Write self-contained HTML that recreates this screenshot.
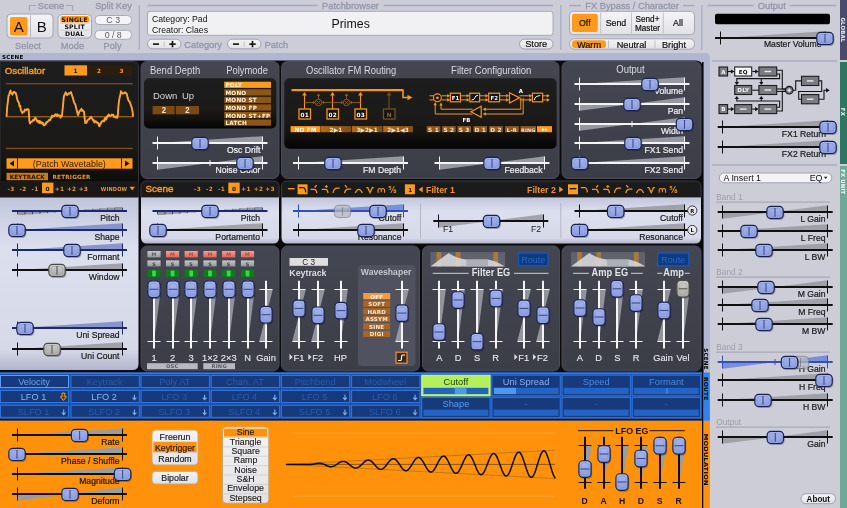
<!DOCTYPE html>
<html lang="en"><head><meta charset="utf-8"><title>Surge</title>
<style>
html,body{margin:0;padding:0;background:#cccdd7;overflow:hidden}
body{width:847px;height:508px}
svg{display:block;font-family:"Liberation Sans",sans-serif;will-change:transform;transform:translateZ(0)}
.px{font-family:"DejaVu Sans","Liberation Sans",sans-serif;letter-spacing:0.2px}
</style></head><body>
<svg width="847" height="508" viewBox="0 0 847 508">
<defs>
<linearGradient id="hg" x1="0" y1="0" x2="0" y2="1"><stop offset="0" stop-color="#a6b6ef"/><stop offset="1" stop-color="#8b9cdd"/></linearGradient>
<linearGradient id="hgg" x1="0" y1="0" x2="0" y2="1"><stop offset="0" stop-color="#cfcfcf"/><stop offset="1" stop-color="#a9a9a9"/></linearGradient>
<linearGradient id="lightp" x1="0" y1="0" x2="0" y2="1"><stop offset="0" stop-color="#c2c6dc"/><stop offset="0.3" stop-color="#dcdfed"/><stop offset="0.88" stop-color="#d6d9e8"/><stop offset="1" stop-color="#b2b5ca"/></linearGradient>
<linearGradient id="darkp" x1="0" y1="0" x2="0" y2="1"><stop offset="0" stop-color="#444651"/><stop offset="1" stop-color="#3b3d47"/></linearGradient>
<linearGradient id="blk" x1="0" y1="0" x2="0" y2="1"><stop offset="0" stop-color="#1d1d1d"/><stop offset="0.62" stop-color="#1b1a19"/><stop offset="0.8" stop-color="#131211"/><stop offset="1" stop-color="#040404"/></linearGradient>
<linearGradient id="fmb" x1="0" y1="0" x2="1" y2="0"><stop offset="0" stop-color="#b36c18"/><stop offset="1" stop-color="#85500f"/></linearGradient>
<linearGradient id="mred" x1="0" y1="0" x2="0" y2="1"><stop offset="0" stop-color="#f6a093"/><stop offset="1" stop-color="#de6558"/></linearGradient>
<linearGradient id="mgry" x1="0" y1="0" x2="0" y2="1"><stop offset="0" stop-color="#c6c7cc"/><stop offset="1" stop-color="#96979e"/></linearGradient>
<linearGradient id="btn" x1="0" y1="0" x2="0" y2="1"><stop offset="0" stop-color="#f4f4f6"/><stop offset="1" stop-color="#e2e2e6"/></linearGradient>
</defs>
<rect x="0" y="0" width="847" height="508" fill="#cccdd7"/>
<rect x="0" y="53" width="706" height="9" fill="#b3b6d0"/>
<path d="M700 53 H706 Q710 53 710 58 V508 H700 Z" fill="#b3b6d0"/>
<path d="M0 60.5 H696 Q702.5 60.5 702.5 67 V508 H0 Z" fill="#0b0b0e"/>
<text x="2" y="59.3" font-size="5.6" fill="#000" font-weight="bold" class="px">SCENE</text>
<rect x="840" y="0" width="7" height="60" fill="#4a4a6a"/>
<rect x="840" y="62" width="7" height="102" fill="#2d7661"/>
<rect x="840" y="166" width="7" height="342" fill="#6fa896"/>
<text x="0" y="0" font-size="5.6" fill="#eeeef4" font-weight="bold" class="px" transform="translate(841.2 17.4) rotate(90)" textLength="25" lengthAdjust="spacingAndGlyphs">GLOBAL</text>
<text x="0" y="0" font-size="5.6" fill="#e4f5ee" font-weight="bold" class="px" transform="translate(841.2 107.8) rotate(90)" textLength="8.2" lengthAdjust="spacingAndGlyphs">FX</text>
<text x="0" y="0" font-size="5.6" fill="#f4fffa" font-weight="bold" class="px" transform="translate(841.2 169.3) rotate(90)" textLength="25" lengthAdjust="spacingAndGlyphs">FX UNIT</text>
<text transform="translate(51 8.7) scale(0.99 1)" font-size="9.4" fill="#9496aa" text-anchor="middle" stroke="#9496aa" stroke-width="0.3">Scene</text>
<path d="M29.5 11 V5.5 H36" fill="none" stroke="#a3a6bf" stroke-width="1.2"/>
<path d="M66 5.5 H72.5 V11" fill="none" stroke="#a3a6bf" stroke-width="1.2"/>
<rect x="7" y="14" width="46" height="24" fill="url(#btn)" rx="4" stroke="#a4a6b6" stroke-width="1"/>
<rect x="10" y="17" width="17.5" height="18.5" fill="#ff9a1a" rx="2"/>
<line x1="30.5" y1="15" x2="30.5" y2="37" stroke="#b9bac6" stroke-width="1" />
<text x="18.7" y="31.5" font-size="15" fill="#111" text-anchor="middle">A</text>
<text x="41.7" y="31.5" font-size="15" fill="#111" text-anchor="middle">B</text>
<text transform="translate(28 49.3) scale(0.99 1)" font-size="9.4" fill="#9496aa" text-anchor="middle" stroke="#9496aa" stroke-width="0.3">Select</text>
<rect x="58" y="14.5" width="33.5" height="23.5" fill="url(#btn)" rx="4" stroke="#a4a6b6" stroke-width="1"/>
<rect x="60.5" y="16" width="28.5" height="6.6" fill="#ff9a1a" rx="1.5"/>
<line x1="60" y1="23.2" x2="89.5" y2="23.2" stroke="#c4c5cf" stroke-width="0.8" />
<line x1="60" y1="30.2" x2="89.5" y2="30.2" stroke="#c4c5cf" stroke-width="0.8" />
<text x="74.7" y="21.7" font-size="6.2" fill="#1a1208" text-anchor="middle" font-weight="bold" class="px">SINGLE</text>
<text x="74.7" y="29" font-size="6.2" fill="#111" text-anchor="middle" font-weight="bold" class="px">SPLIT</text>
<text x="74.7" y="36.2" font-size="6.2" fill="#111" text-anchor="middle" font-weight="bold" class="px">DUAL</text>
<text transform="translate(72.5 49.3) scale(0.99 1)" font-size="9.4" fill="#9496aa" text-anchor="middle" stroke="#9496aa" stroke-width="0.3">Mode</text>
<text transform="translate(113.5 8.7) scale(0.99 1)" font-size="9.4" fill="#9496aa" text-anchor="middle" stroke="#9496aa" stroke-width="0.3">Split Key</text>
<rect x="95" y="15.5" width="36.5" height="9" fill="#f4f4f6" rx="4" stroke="#a8aaba" stroke-width="1"/>
<text x="113.2" y="23.3" font-size="8.8" fill="#5c5c62" text-anchor="middle">C 3</text>
<rect x="95" y="30.3" width="36.5" height="9" fill="#f4f4f6" rx="4" stroke="#a8aaba" stroke-width="1"/>
<text x="113.2" y="38.1" font-size="8.8" fill="#5c5c62" text-anchor="middle">0 / 8</text>
<text transform="translate(112.5 49.3) scale(0.99 1)" font-size="9.4" fill="#9496aa" text-anchor="middle" stroke="#9496aa" stroke-width="0.3">Poly</text>
<line x1="139.3" y1="5" x2="139.3" y2="50" stroke="#a9acc4" stroke-width="1.3" />
<text transform="translate(350.5 8.6) scale(0.99 1)" font-size="9.4" fill="#9496aa" text-anchor="middle" stroke="#9496aa" stroke-width="0.3">Patchbrowser</text>
<line x1="147.5" y1="5.6" x2="317.5" y2="5.6" stroke="#a6a9c2" stroke-width="1.5" />
<line x1="383.5" y1="5.6" x2="553" y2="5.6" stroke="#a6a9c2" stroke-width="1.5" />
<rect x="147.5" y="11.3" width="405.5" height="24" fill="#f1f1f3" rx="2.5" stroke="#a6a8b8" stroke-width="1"/>
<text x="152" y="21.6" font-size="8.7" fill="#111">Category: Pad</text>
<text x="152" y="32.6" font-size="8.7" fill="#111">Creator: Claes</text>
<text x="350.7" y="27.7" font-size="12.3" fill="#111" text-anchor="middle">Primes</text>
<rect x="147.5" y="39.2" width="33.5" height="9.6" fill="url(#btn)" rx="4.8" stroke="#9fa1b2" stroke-width="1"/>
<line x1="164.2" y1="41.5" x2="164.2" y2="46.5" stroke="#b5b6c2" stroke-width="0.8" />
<rect x="153" y="43.3" width="6" height="1.6" fill="#111"/>
<rect x="169.3" y="43.3" width="6.4" height="1.6" fill="#111"/>
<rect x="171.7" y="40.9" width="1.6" height="6.4" fill="#111"/>
<text transform="translate(184.3 47.6) scale(0.99 1)" font-size="9.4" fill="#9496aa" stroke="#9496aa" stroke-width="0.3">Category</text>
<rect x="227.5" y="39.2" width="33.5" height="9.6" fill="url(#btn)" rx="4.8" stroke="#9fa1b2" stroke-width="1"/>
<line x1="244.2" y1="41.5" x2="244.2" y2="46.5" stroke="#b5b6c2" stroke-width="0.8" />
<rect x="233" y="43.3" width="6" height="1.6" fill="#111"/>
<rect x="249.3" y="43.3" width="6.4" height="1.6" fill="#111"/>
<rect x="251.7" y="40.9" width="1.6" height="6.4" fill="#111"/>
<text transform="translate(264.5 47.6) scale(0.99 1)" font-size="9.4" fill="#9496aa" stroke="#9496aa" stroke-width="0.3">Patch</text>
<rect x="519.5" y="39.2" width="33.5" height="9.8" fill="url(#btn)" rx="4.9" stroke="#9fa1b2" stroke-width="1"/>
<text x="536.2" y="47.3" font-size="9.2" fill="#111" text-anchor="middle" stroke="#111" stroke-width="0.2">Store</text>
<line x1="560.8" y1="5" x2="560.8" y2="50" stroke="#a9acc4" stroke-width="1.3" />
<text transform="translate(632 8.6) scale(0.99 1)" font-size="9.4" fill="#9496aa" text-anchor="middle" stroke="#9496aa" stroke-width="0.3">FX Bypass / Character</text>
<line x1="569" y1="5.6" x2="581" y2="5.6" stroke="#a6a9c2" stroke-width="1.5" />
<line x1="683" y1="5.6" x2="694.5" y2="5.6" stroke="#a6a9c2" stroke-width="1.5" />
<rect x="569.5" y="11.3" width="125" height="23.4" fill="url(#btn)" rx="4" stroke="#a4a6b6" stroke-width="1"/>
<rect x="572" y="13.8" width="25.8" height="18.3" fill="#ff9a1a" rx="2"/>
<line x1="600.7" y1="12.5" x2="600.7" y2="33.5" stroke="#c0c1cc" stroke-width="1" />
<line x1="631.5" y1="12.5" x2="631.5" y2="33.5" stroke="#c0c1cc" stroke-width="1" />
<line x1="663.3" y1="12.5" x2="663.3" y2="33.5" stroke="#c0c1cc" stroke-width="1" />
<text x="584.8" y="26.2" font-size="8.8" fill="#1a1208" text-anchor="middle" stroke="#111" stroke-width="0.2">Off</text>
<text x="616" y="26.2" font-size="8.8" fill="#111" text-anchor="middle" stroke="#111" stroke-width="0.2">Send</text>
<text x="647.5" y="22" font-size="8.2" fill="#111" text-anchor="middle" stroke="#111" stroke-width="0.2">Send+</text>
<text x="647.5" y="31.2" font-size="8.2" fill="#111" text-anchor="middle" stroke="#111" stroke-width="0.2">Master</text>
<text x="678" y="26.2" font-size="8.8" fill="#111" text-anchor="middle" stroke="#111" stroke-width="0.2">All</text>
<rect x="569.5" y="38.8" width="125" height="10.4" fill="url(#btn)" rx="5" stroke="#a4a6b6" stroke-width="1"/>
<rect x="572" y="40.3" width="34" height="7.6" fill="#ff9a1a" rx="3"/>
<line x1="608.5" y1="40.3" x2="608.5" y2="48" stroke="#c0c1cc" stroke-width="1" />
<line x1="655" y1="40.3" x2="655" y2="48" stroke="#c0c1cc" stroke-width="1" />
<text x="589" y="47.5" font-size="9.2" fill="#1a1208" text-anchor="middle" stroke="#111" stroke-width="0.2">Warm</text>
<text x="631.5" y="47.5" font-size="9.2" fill="#111" text-anchor="middle" stroke="#111" stroke-width="0.2">Neutral</text>
<text x="674" y="47.5" font-size="9.2" fill="#111" text-anchor="middle" stroke="#111" stroke-width="0.2">Bright</text>
<line x1="701.8" y1="5" x2="701.8" y2="50" stroke="#a9acc4" stroke-width="1.3" />
<text transform="translate(771.8 8.6) scale(0.99 1)" font-size="9.4" fill="#9496aa" text-anchor="middle" stroke="#9496aa" stroke-width="0.3">Output</text>
<line x1="707.5" y1="5.6" x2="753.8" y2="5.6" stroke="#a6a9c2" stroke-width="1.5" />
<line x1="789.8" y1="5.6" x2="836.3" y2="5.6" stroke="#a6a9c2" stroke-width="1.5" />
<rect x="715" y="13.8" width="115" height="10.5" fill="#000" rx="2"/>
<polygon points="720.5,38 825.5,31.2 825.5,38" fill="#9a9ba3" opacity="0.9"/>
<line x1="715" y1="38" x2="830" y2="38" stroke="#101010" stroke-width="2" />
<line x1="720.5" y1="31.5" x2="720.5" y2="44.5" stroke="#101010" stroke-width="1" />
<line x1="825.5" y1="31.5" x2="825.5" y2="44.5" stroke="#101010" stroke-width="1" />
<text transform="translate(821.5 47.2) scale(0.92 1)" font-size="9.4" fill="#1a1a1a" text-anchor="end" stroke="#1a1a1a" stroke-width="0.22">Master Volume</text>
<rect x="817.4" y="33.4" width="17" height="12.6" rx="4.2" fill="#0c1230" opacity="0.32"/>
<rect x="816.8" y="32.3" width="16.4" height="12.2" fill="url(#hg)" rx="4" stroke="#18224e" stroke-width="1.15"/>
<rect x="819.2" y="34.5" width="11.6" height="7.8" fill="none" rx="2.6" stroke="#8797d8" stroke-width="0.9" opacity="0.7"/>
<line x1="825" y1="34" x2="825" y2="42.8" stroke="#3c4c92" stroke-width="1.1" />
<path d="M0 61.5 H133 Q138.5 61.5 138.5 67 V197.5 H0 Z" fill="url(#blk)" stroke="#33343c" stroke-width="1"/>
<path d="M0 197 H138.5 V364 Q138.5 370 132.5 370 H0 Z" fill="url(#lightp)"/>
<text transform="translate(4.8 73.6) scale(0.98 1)" font-size="9.9" fill="#ff9a1a" stroke="#ff9a1a" stroke-width="0.45">Oscillator</text>
<rect x="64.5" y="65.3" width="68" height="10.2" fill="#2c1e0c"/>
<rect x="64.5" y="65.3" width="22.5" height="10.2" fill="#ff9a1a"/>
<text x="75.7" y="73.2" font-size="5.8" fill="#1a1208" text-anchor="middle" font-weight="bold" class="px">1</text>
<text x="99" y="73.2" font-size="5.8" fill="#ff9a1a" text-anchor="middle" font-weight="bold" class="px">2</text>
<text x="121.5" y="73.2" font-size="5.8" fill="#ff9a1a" text-anchor="middle" font-weight="bold" class="px">3</text>
<line x1="5.8" y1="83.8" x2="133" y2="83.8" stroke="#9a5d14" stroke-width="1" />
<line x1="5.8" y1="148.3" x2="133" y2="148.3" stroke="#9a5d14" stroke-width="1" />
<line x1="5.8" y1="116.8" x2="133" y2="116.8" stroke="#d07f18" stroke-width="0.9" />
<path d="M6.6 116.8 L6.6 116.31 L7.25 106.06 L7.9 101.51 L8.55 95.63 L9.2 94.72 L9.85 92.04 L10.5 90.58 L11.15 93.21 L11.8 93.27 L12.45 94.7 L13.1 92.79 L13.75 91.96 L14.4 92.01 L15.05 92.78 L15.7 92.72 L16.35 94.9 L17 97.93 L17.65 100.74 L18.3 101.61 L18.95 103.02 L19.6 106.56 L20.25 105.87 L20.9 110.34 L21.55 111.08 L22.2 113.02 L22.85 112.3 L23.5 111.6 L24.15 111.78 L24.8 109.44 L25.45 110.32 L26.1 110.24 L26.75 109.25 L27.4 109.65 L28.05 109.04 L28.7 109.94 L29.35 120.81 L30 123.63 L30.65 122.46 L31.3 121.68 L31.95 121.85 L32.6 120.81 L33.25 119.71 L33.9 120.43 L34.55 119.49 L35.2 117.55 L35.85 118.74 L36.5 119.48 L37.15 121.33 L37.8 121.7 L38.45 120.75 L39.1 122.98 L39.75 120.86 L40.4 122 L41.05 123.26 L41.7 122.15 L42.35 123.68 L43 123 L43.65 125.35 L44.3 125.28 L44.95 124.15 L45.6 124.42 L46.25 122.26 L46.9 122.7 L47.55 121.76 L48.2 121.06 L48.85 120.06 L49.5 120.47 L50.15 120.11 L50.8 118.13 L51.45 117.97 L52.1 115.58 L52.75 116.67 L53.4 115.82 L54.05 116.08 L54.7 115.45 L55.35 114.22 L56 114.77 L56.65 115.83 L57.3 114.29 L57.95 115.78 L58.6 115.23 L59.25 115.37 L59.9 115.48 L60.55 117.75 L61.2 116.23 L61.85 116.24 L62.5 110.49 L63.15 104.38 L63.8 96.51 L64.45 95.33 L65.1 93.4 L65.75 92.36 L66.4 93.56 L67.05 95.05 L67.7 94.61 L68.35 94.1 L69 93.06 L69.65 93.64 L70.3 92.95 L70.95 92.06 L71.6 94.03 L72.25 96.09 L72.9 98 L73.55 100.62 L74.2 102.83 L74.85 103.82 L75.5 105.01 L76.15 108.2 L76.8 110.41 L77.45 113.3 L78.1 115.11 L78.75 113.14 L79.4 111.42 L80.05 110.76 L80.7 110.68 L81.35 108.69 L82 110.82 L82.65 110.24 L83.3 111.02 L83.95 111.56 L84.6 117.31 L85.25 123.02 L85.9 121.73 L86.55 122.75 L87.2 120.65 L87.85 119.99 L88.5 119.72 L89.15 118.92 L89.8 118.75 L90.45 117.27 L91.1 116.79 L91.75 118.09 L92.4 118.83 L93.05 120.44 L93.7 119.91 L94.35 122.58 L95 122.14 L95.65 121.13 L96.3 121.71 L96.95 122.47 L97.6 123.1 L98.25 123.01 L98.9 125.63 L99.55 126.14 L100.2 124.08 L100.85 123.54 L101.5 121.84 L102.15 121.29 L102.8 121.31 L103.45 120.43 L104.1 121.35 L104.75 118.83 L105.4 117.78 L106.05 119.72 L106.7 117.86 L107.35 116.09 L108 116.5 L108.65 114.35 L109.3 115.05 L109.95 115.79 L110.6 115.73 L111.25 115.53 L111.9 114.58 L112.55 115.15 L113.2 114.86 L113.85 116.82 L114.5 116.43 L115.15 117.39 L115.8 116.41 L116.45 116.39 L117.1 117.97 L117.75 115.91 L118.4 106.58 L119.05 100.59 L119.7 97.21 L120.35 94.79 L121 91.14 L121.65 92.18 L122.3 93.1 L122.95 93.56 L123.6 93.36 L124.25 93.18 L124.9 92.23 L125.55 92.55 L126.2 93.58 L126.85 94.06 L127.5 97.34 L128.15 99.38 L128.8 101.2 L129.45 101.46 L130.1 102.97 L130.75 104.9 L131.4 106.73 L132.05 109.04 L132.7 112.56 L133 116.8" fill="none" stroke="#ffa42e" stroke-width="1.9" stroke-linejoin="round"/>
<rect x="6.5" y="158.3" width="126" height="10.4" fill="#ff9a1a"/>
<line x1="17.5" y1="158.3" x2="17.5" y2="168.7" stroke="#1c1c1c" stroke-width="1" />
<line x1="121.5" y1="158.3" x2="121.5" y2="168.7" stroke="#1c1c1c" stroke-width="1" />
<polygon points="9.5,163.5 14,160.4 14,166.6" fill="#111" />
<polygon points="129.5,163.5 125,160.4 125,166.6" fill="#111" />
<text transform="translate(69.3 166.9) scale(0.93 1)" font-size="9.6" fill="#2a1a04" text-anchor="middle">(Patch Wavetable)</text>
<rect x="6.5" y="172.8" width="41.5" height="7.4" fill="#c87b17"/>
<text x="27.3" y="179" font-size="5.7" fill="#1c1204" text-anchor="middle" font-weight="bold" class="px">KEYTRACK</text>
<text x="52.5" y="179" font-size="5.7" fill="#f0951f" font-weight="bold" class="px">RETRIGGER</text>
<rect x="0" y="181" width="138.5" height="16.5" fill="#191919"/>
<text x="11" y="190.6" font-size="5.8" fill="#f0951f" text-anchor="middle" font-weight="bold" class="px">-3</text>
<text x="23" y="190.6" font-size="5.8" fill="#f0951f" text-anchor="middle" font-weight="bold" class="px">-2</text>
<text x="35" y="190.6" font-size="5.8" fill="#f0951f" text-anchor="middle" font-weight="bold" class="px">-1</text>
<rect x="42" y="182.6" width="11.4" height="10.6" fill="#ff9a1a"/>
<text x="47.7" y="190.6" font-size="5.8" fill="#1a1208" text-anchor="middle" font-weight="bold" class="px">0</text>
<text x="59.5" y="190.6" font-size="5.8" fill="#f0951f" text-anchor="middle" font-weight="bold" class="px">+1</text>
<text x="71.7" y="190.6" font-size="5.8" fill="#f0951f" text-anchor="middle" font-weight="bold" class="px">+2</text>
<text x="83.3" y="190.6" font-size="5.8" fill="#f0951f" text-anchor="middle" font-weight="bold" class="px">+3</text>
<text x="100.7" y="190.6" font-size="5.6" fill="#f0951f" font-weight="bold" class="px" textLength="26.6" lengthAdjust="spacingAndGlyphs">WINDOW</text>
<polygon points="129.5,186.8 135,186.8 132.2,190.4" fill="#f0951f" />
<rect x="17.5" y="211" width="7.5" height="3.99" fill="#8f9099" opacity="0.9"/>
<line x1="17.5" y1="211" x2="17.5" y2="214.2" stroke="#1b2a6b" stroke-width="0.8" />
<rect x="25" y="211" width="7.5" height="3.38" fill="#8f9099" opacity="0.9"/>
<line x1="25" y1="211" x2="25" y2="214.2" stroke="#1b2a6b" stroke-width="0.8" />
<rect x="32.5" y="211" width="7.5" height="2.76" fill="#8f9099" opacity="0.9"/>
<line x1="32.5" y1="211" x2="32.5" y2="214.2" stroke="#1b2a6b" stroke-width="0.8" />
<rect x="40" y="211" width="7.5" height="2.15" fill="#8f9099" opacity="0.9"/>
<line x1="40" y1="211" x2="40" y2="213.75" stroke="#1b2a6b" stroke-width="0.8" />
<rect x="47.5" y="211" width="7.5" height="1.54" fill="#8f9099" opacity="0.9"/>
<line x1="47.5" y1="211" x2="47.5" y2="213.14" stroke="#1b2a6b" stroke-width="0.8" />
<rect x="55" y="211" width="7.5" height="0.92" fill="#8f9099" opacity="0.9"/>
<line x1="55" y1="211" x2="55" y2="212.52" stroke="#1b2a6b" stroke-width="0.8" />
<rect x="62.5" y="211" width="7.5" height="0.31" fill="#8f9099" opacity="0.9"/>
<line x1="62.5" y1="211" x2="62.5" y2="211.91" stroke="#1b2a6b" stroke-width="0.8" />
<rect x="70" y="210.69" width="7.5" height="0.31" fill="#8f9099" opacity="0.9"/>
<line x1="77.5" y1="210.09" x2="77.5" y2="211" stroke="#1b2a6b" stroke-width="0.8" />
<rect x="77.5" y="210.08" width="7.5" height="0.92" fill="#8f9099" opacity="0.9"/>
<line x1="85" y1="209.48" x2="85" y2="211" stroke="#1b2a6b" stroke-width="0.8" />
<rect x="85" y="209.46" width="7.5" height="1.54" fill="#8f9099" opacity="0.9"/>
<line x1="92.5" y1="208.86" x2="92.5" y2="211" stroke="#1b2a6b" stroke-width="0.8" />
<rect x="92.5" y="208.85" width="7.5" height="2.15" fill="#8f9099" opacity="0.9"/>
<line x1="100" y1="208.25" x2="100" y2="211" stroke="#1b2a6b" stroke-width="0.8" />
<rect x="100" y="208.24" width="7.5" height="2.76" fill="#8f9099" opacity="0.9"/>
<line x1="107.5" y1="207.8" x2="107.5" y2="211" stroke="#1b2a6b" stroke-width="0.8" />
<rect x="107.5" y="207.62" width="7.5" height="3.38" fill="#8f9099" opacity="0.9"/>
<line x1="115" y1="207.8" x2="115" y2="211" stroke="#1b2a6b" stroke-width="0.8" />
<rect x="115" y="207.01" width="7.5" height="3.99" fill="#8f9099" opacity="0.9"/>
<line x1="122.5" y1="207.8" x2="122.5" y2="211" stroke="#1b2a6b" stroke-width="0.8" />
<line x1="12" y1="211" x2="127" y2="211" stroke="#1b2a6b" stroke-width="2" />
<text transform="translate(119.5 220.7) scale(0.92 1)" font-size="9.4" fill="#1a1a1a" text-anchor="end" stroke="#1a1a1a" stroke-width="0.22">Pitch</text>
<rect x="62.4" y="206.4" width="17" height="12.6" rx="4.2" fill="#0c1230" opacity="0.32"/>
<rect x="61.8" y="205.3" width="16.4" height="12.2" fill="url(#hg)" rx="4" stroke="#18224e" stroke-width="1.15"/>
<rect x="64.2" y="207.5" width="11.6" height="7.8" fill="none" rx="2.6" stroke="#8797d8" stroke-width="0.9" opacity="0.7"/>
<line x1="70" y1="207" x2="70" y2="215.8" stroke="#3c4c92" stroke-width="1.1" />
<polygon points="17.5,230 122.5,223.2 122.5,230" fill="#7f8dc9" opacity="0.9"/>
<line x1="12" y1="230" x2="127" y2="230" stroke="#1b2a6b" stroke-width="2" />
<line x1="17.5" y1="223.5" x2="17.5" y2="236.5" stroke="#1b2a6b" stroke-width="1" />
<line x1="122.5" y1="223.5" x2="122.5" y2="236.5" stroke="#1b2a6b" stroke-width="1" />
<text transform="translate(119.5 239.7) scale(0.92 1)" font-size="9.4" fill="#1a1a1a" text-anchor="end" stroke="#1a1a1a" stroke-width="0.22">Shape</text>
<rect x="9.4" y="225.4" width="17" height="12.6" rx="4.2" fill="#0c1230" opacity="0.32"/>
<rect x="8.8" y="224.3" width="16.4" height="12.2" fill="url(#hg)" rx="4" stroke="#18224e" stroke-width="1.15"/>
<rect x="11.2" y="226.5" width="11.6" height="7.8" fill="none" rx="2.6" stroke="#8797d8" stroke-width="0.9" opacity="0.7"/>
<line x1="17" y1="226" x2="17" y2="234.8" stroke="#3c4c92" stroke-width="1.1" />
<polygon points="17.5,250 122.5,243.2 122.5,250" fill="#7f8dc9" opacity="0.9"/>
<line x1="12" y1="250" x2="127" y2="250" stroke="#1b2a6b" stroke-width="2" />
<line x1="17.5" y1="243.5" x2="17.5" y2="256.5" stroke="#1b2a6b" stroke-width="1" />
<line x1="122.5" y1="243.5" x2="122.5" y2="256.5" stroke="#1b2a6b" stroke-width="1" />
<text transform="translate(119.5 259.7) scale(0.92 1)" font-size="9.4" fill="#1a1a1a" text-anchor="end" stroke="#1a1a1a" stroke-width="0.22">Formant</text>
<rect x="64.4" y="245.4" width="17" height="12.6" rx="4.2" fill="#0c1230" opacity="0.32"/>
<rect x="63.8" y="244.3" width="16.4" height="12.2" fill="url(#hg)" rx="4" stroke="#18224e" stroke-width="1.15"/>
<rect x="66.2" y="246.5" width="11.6" height="7.8" fill="none" rx="2.6" stroke="#8797d8" stroke-width="0.9" opacity="0.7"/>
<line x1="72" y1="246" x2="72" y2="254.8" stroke="#3c4c92" stroke-width="1.1" />
<polygon points="17.5,270 122.5,263.2 122.5,270" fill="#9a9ba3" opacity="0.9"/>
<line x1="12" y1="270" x2="127" y2="270" stroke="#101010" stroke-width="2" />
<line x1="17.5" y1="263.5" x2="17.5" y2="276.5" stroke="#101010" stroke-width="1" />
<line x1="122.5" y1="263.5" x2="122.5" y2="276.5" stroke="#101010" stroke-width="1" />
<text transform="translate(119.5 279.7) scale(0.92 1)" font-size="9.4" fill="#1a1a1a" text-anchor="end" stroke="#1a1a1a" stroke-width="0.22">Window</text>
<rect x="49.4" y="265.4" width="17" height="12.6" rx="4.2" fill="#101010" opacity="0.3"/>
<rect x="48.8" y="264.3" width="16.4" height="12.2" fill="url(#hgg)" rx="4" stroke="#4b4b46" stroke-width="1.15"/>
<rect x="51.2" y="266.5" width="11.6" height="7.8" fill="none" rx="2.6" stroke="#a4a4a0" stroke-width="0.9" opacity="0.7"/>
<line x1="57" y1="266" x2="57" y2="274.8" stroke="#5a5a58" stroke-width="1.1" />
<polygon points="17.5,328 122.5,321.2 122.5,328" fill="#7f8dc9" opacity="0.9"/>
<line x1="12" y1="328" x2="127" y2="328" stroke="#1b2a6b" stroke-width="2" />
<line x1="17.5" y1="321.5" x2="17.5" y2="334.5" stroke="#1b2a6b" stroke-width="1" />
<line x1="122.5" y1="321.5" x2="122.5" y2="334.5" stroke="#1b2a6b" stroke-width="1" />
<text transform="translate(119.5 337.7) scale(0.92 1)" font-size="9.4" fill="#1a1a1a" text-anchor="end" stroke="#1a1a1a" stroke-width="0.22">Uni Spread</text>
<rect x="17.4" y="323.4" width="17" height="12.6" rx="4.2" fill="#0c1230" opacity="0.32"/>
<rect x="16.8" y="322.3" width="16.4" height="12.2" fill="url(#hg)" rx="4" stroke="#18224e" stroke-width="1.15"/>
<rect x="19.2" y="324.5" width="11.6" height="7.8" fill="none" rx="2.6" stroke="#8797d8" stroke-width="0.9" opacity="0.7"/>
<line x1="25" y1="324" x2="25" y2="332.8" stroke="#3c4c92" stroke-width="1.1" />
<polygon points="17.5,349 122.5,342.2 122.5,349" fill="#9a9ba3" opacity="0.9"/>
<line x1="12" y1="349" x2="127" y2="349" stroke="#101010" stroke-width="2" />
<line x1="17.5" y1="342.5" x2="17.5" y2="355.5" stroke="#101010" stroke-width="1" />
<line x1="122.5" y1="342.5" x2="122.5" y2="355.5" stroke="#101010" stroke-width="1" />
<text transform="translate(119.5 358.7) scale(0.92 1)" font-size="9.4" fill="#1a1a1a" text-anchor="end" stroke="#1a1a1a" stroke-width="0.22">Uni Count</text>
<rect x="44.4" y="344.4" width="17" height="12.6" rx="4.2" fill="#101010" opacity="0.3"/>
<rect x="43.8" y="343.3" width="16.4" height="12.2" fill="url(#hgg)" rx="4" stroke="#4b4b46" stroke-width="1.15"/>
<rect x="46.2" y="345.5" width="11.6" height="7.8" fill="none" rx="2.6" stroke="#a4a4a0" stroke-width="0.9" opacity="0.7"/>
<line x1="52" y1="345" x2="52" y2="353.8" stroke="#5a5a58" stroke-width="1.1" />
<rect x="141" y="61.5" width="138" height="117" fill="url(#darkp)" rx="6" stroke="#4a4c57" stroke-width="1"/>
<text transform="translate(150 74) scale(0.95 1)" font-size="10" fill="#d9dae0">Bend Depth</text>
<text transform="translate(226.3 74) scale(0.94 1)" font-size="10" fill="#d9dae0">Polymode</text>
<rect x="144" y="78.3" width="132.3" height="50.2" fill="url(#blk)" rx="5"/>
<text transform="translate(153 98.6) scale(0.97 1)" font-size="9.8" fill="#d8d8dc">Down</text>
<text transform="translate(182 98.6) scale(0.97 1)" font-size="9.8" fill="#d8d8dc">Up</text>
<rect x="152.6" y="106" width="22" height="8.3" fill="#7a4a12"/>
<rect x="175.8" y="106" width="23.2" height="8.3" fill="#7a4a12"/>
<text transform="translate(163.8 113.3) scale(0.9 1)" font-size="8.6" fill="#f4e6d0" text-anchor="middle" font-weight="bold">2</text>
<text transform="translate(187.4 113.3) scale(0.9 1)" font-size="8.6" fill="#f4e6d0" text-anchor="middle" font-weight="bold">2</text>
<rect x="224.2" y="81.7" width="46.8" height="6.2" fill="#ff9a1a"/>
<text x="225.5" y="87.3" font-size="5.7" fill="#fff" font-weight="bold" class="px">POLY</text>
<rect x="224.2" y="89.26" width="46.8" height="6.2" fill="#8f5612"/>
<text x="225.5" y="94.86" font-size="5.7" fill="#fff3dd" font-weight="bold" class="px">MONO</text>
<rect x="224.2" y="96.82" width="46.8" height="6.2" fill="#8f5612"/>
<text x="225.5" y="102.42" font-size="5.7" fill="#fff3dd" font-weight="bold" class="px">MONO ST</text>
<rect x="224.2" y="104.38" width="46.8" height="6.2" fill="#8f5612"/>
<text x="225.5" y="109.98" font-size="5.7" fill="#fff3dd" font-weight="bold" class="px">MONO FP</text>
<rect x="224.2" y="111.94" width="46.8" height="6.2" fill="#8f5612"/>
<text x="225.5" y="117.54" font-size="5.7" fill="#fff3dd" font-weight="bold" class="px">MONO ST+FP</text>
<rect x="224.2" y="119.5" width="46.8" height="6.2" fill="#8f5612"/>
<text x="225.5" y="125.1" font-size="5.7" fill="#fff3dd" font-weight="bold" class="px">LATCH</text>
<polygon points="157.5,143 262.5,136.2 262.5,143" fill="#a0a2ab" opacity="0.9"/>
<line x1="152.5" y1="143" x2="267.5" y2="143" stroke="#f4f4f4" stroke-width="2" />
<line x1="157.5" y1="136.5" x2="157.5" y2="149.5" stroke="#f4f4f4" stroke-width="1" />
<line x1="262.5" y1="136.5" x2="262.5" y2="149.5" stroke="#f4f4f4" stroke-width="1" />
<text transform="translate(260.5 152.7) scale(0.92 1)" font-size="9.4" fill="#efeff1" text-anchor="end" stroke="#efeff1" stroke-width="0.22">Osc Drift</text>
<rect x="192.4" y="138.4" width="17" height="12.6" rx="4.2" fill="#0c1230" opacity="0.32"/>
<rect x="191.8" y="137.3" width="16.4" height="12.2" fill="url(#hg)" rx="4" stroke="#18224e" stroke-width="1.15"/>
<rect x="194.2" y="139.5" width="11.6" height="7.8" fill="none" rx="2.6" stroke="#8797d8" stroke-width="0.9" opacity="0.7"/>
<line x1="200" y1="139" x2="200" y2="147.8" stroke="#3c4c92" stroke-width="1.1" />
<polygon points="157.5,163 157.5,169.8 210,163" fill="#a0a2ab" opacity="0.9"/>
<polygon points="210,163 262.5,156.2 262.5,163" fill="#a0a2ab" opacity="0.9"/>
<line x1="152.5" y1="163" x2="267.5" y2="163" stroke="#f4f4f4" stroke-width="2" />
<line x1="157.5" y1="156.5" x2="157.5" y2="169.5" stroke="#f4f4f4" stroke-width="1" />
<line x1="262.5" y1="156.5" x2="262.5" y2="169.5" stroke="#f4f4f4" stroke-width="1" />
<line x1="210" y1="160" x2="210" y2="166" stroke="#f4f4f4" stroke-width="1" />
<text transform="translate(260.5 172.7) scale(0.92 1)" font-size="9.4" fill="#efeff1" text-anchor="end" stroke="#efeff1" stroke-width="0.22">Noise Color</text>
<rect x="237.4" y="158.4" width="17" height="12.6" rx="4.2" fill="#0c1230" opacity="0.32"/>
<rect x="236.8" y="157.3" width="16.4" height="12.2" fill="url(#hg)" rx="4" stroke="#18224e" stroke-width="1.15"/>
<rect x="239.2" y="159.5" width="11.6" height="7.8" fill="none" rx="2.6" stroke="#8797d8" stroke-width="0.9" opacity="0.7"/>
<line x1="245" y1="159" x2="245" y2="167.8" stroke="#3c4c92" stroke-width="1.1" />
<rect x="281.5" y="61.5" width="277.5" height="117" fill="url(#darkp)" rx="6" stroke="#4a4c57" stroke-width="1"/>
<text transform="translate(351.2 74) scale(0.94 1)" font-size="10" fill="#d9dae0" text-anchor="middle">Oscillator FM Routing</text>
<text transform="translate(491.2 74) scale(0.95 1)" font-size="10" fill="#d9dae0" text-anchor="middle">Filter Configuration</text>
<rect x="284.3" y="78.3" width="272.3" height="70.5" fill="url(#blk)" rx="5"/>
<rect x="291.5" y="89" width="112" height="2.2" fill="#f5951d"/>
<path d="M403 90 V97.5 H408" fill="none" stroke="#f5951d" stroke-width="1.6"/>
<polygon points="407.5,94.7 412.5,97.5 407.5,100.3" fill="#f5951d" />
<rect x="299" y="109" width="11.5" height="10" fill="#141414" stroke="#f5951d" stroke-width="1.3"/>
<text x="304.7" y="117.2" font-size="5.8" fill="#fff" text-anchor="middle" font-weight="bold" class="px">01</text>
<line x1="304.5" y1="93.5" x2="304.5" y2="109" stroke="#f5951d" stroke-width="1.1" />
<polygon points="302.1,95.5 304.5,92 306.9,95.5" fill="#f5951d" />
<rect x="327" y="109" width="11.5" height="10" fill="#141414" stroke="#f5951d" stroke-width="1.3"/>
<text x="332.7" y="117.2" font-size="5.8" fill="#fff" text-anchor="middle" font-weight="bold" class="px">02</text>
<line x1="332.5" y1="93.5" x2="332.5" y2="109" stroke="#f5951d" stroke-width="1.1" />
<polygon points="330.1,95.5 332.5,92 334.9,95.5" fill="#f5951d" />
<rect x="355" y="109" width="11.5" height="10" fill="#141414" stroke="#f5951d" stroke-width="1.3"/>
<text x="360.7" y="117.2" font-size="5.8" fill="#fff" text-anchor="middle" font-weight="bold" class="px">03</text>
<line x1="360.5" y1="93.5" x2="360.5" y2="109" stroke="#f5951d" stroke-width="1.1" />
<polygon points="358.1,95.5 360.5,92 362.9,95.5" fill="#f5951d" />
<rect x="383.5" y="109" width="11.5" height="10" fill="#141414" stroke="#7a4e18" stroke-width="1.3"/>
<text x="389.2" y="117.2" font-size="5.8" fill="#8a6a44" text-anchor="middle" font-weight="bold" class="px">N</text>
<line x1="389" y1="93.5" x2="389" y2="109" stroke="#7a4e18" stroke-width="1.1" />
<polygon points="386.6,95.5 389,92 391.4,95.5" fill="#7a4e18" />
<circle cx="318.5" cy="102.5" r="3.2" fill="none" stroke="#8f5a17" stroke-width="1"/>
<line x1="316.5" y1="100.5" x2="320.5" y2="104.5" stroke="#8f5a17" stroke-width="0.9" />
<line x1="316.5" y1="104.5" x2="320.5" y2="100.5" stroke="#8f5a17" stroke-width="0.9" />
<line x1="318.5" y1="95" x2="318.5" y2="99" stroke="#8f5a17" stroke-width="0.9" />
<polygon points="316.7,96 318.5,93.3 320.3,96" fill="#8f5a17" />
<line x1="304.5" y1="102.5" x2="314.5" y2="102.5" stroke="#8f5a17" stroke-width="0.9" />
<line x1="322.5" y1="102.5" x2="332.5" y2="102.5" stroke="#8f5a17" stroke-width="0.9" />
<polygon points="313,100.8 315.2,102.5 313,104.2" fill="#8f5a17" />
<polygon points="324,100.8 321.8,102.5 324,104.2" fill="#8f5a17" />
<circle cx="346.5" cy="102.5" r="3.2" fill="none" stroke="#8f5a17" stroke-width="1"/>
<line x1="344.5" y1="100.5" x2="348.5" y2="104.5" stroke="#8f5a17" stroke-width="0.9" />
<line x1="344.5" y1="104.5" x2="348.5" y2="100.5" stroke="#8f5a17" stroke-width="0.9" />
<line x1="346.5" y1="95" x2="346.5" y2="99" stroke="#8f5a17" stroke-width="0.9" />
<polygon points="344.7,96 346.5,93.3 348.3,96" fill="#8f5a17" />
<line x1="332.5" y1="102.5" x2="342.5" y2="102.5" stroke="#8f5a17" stroke-width="0.9" />
<line x1="350.5" y1="102.5" x2="360.5" y2="102.5" stroke="#8f5a17" stroke-width="0.9" />
<polygon points="341,100.8 343.2,102.5 341,104.2" fill="#8f5a17" />
<polygon points="352,100.8 349.8,102.5 352,104.2" fill="#8f5a17" />
<rect x="290.6" y="126.1" width="29.8" height="6.1" fill="#ff9a1a"/>
<text x="305.5" y="131.7" font-size="5.7" fill="#fff" text-anchor="middle" font-weight="bold" class="px">NO FM</text>
<rect x="320.8" y="126.1" width="30.4" height="6.1" fill="url(#fmb)"/>
<text x="336" y="131.7" font-size="5.7" fill="#f8e4c4" text-anchor="middle" font-weight="bold" class="px">2▶1</text>
<rect x="352" y="126.1" width="30.4" height="6.1" fill="url(#fmb)"/>
<text x="367.2" y="131.7" font-size="5.7" fill="#f8e4c4" text-anchor="middle" font-weight="bold" class="px">3▶2▶1</text>
<rect x="383.2" y="126.1" width="29.8" height="6.1" fill="url(#fmb)"/>
<text x="398.1" y="131.7" font-size="5.7" fill="#f8e4c4" text-anchor="middle" font-weight="bold" class="px">2▶1◀3</text>
<line x1="429.5" y1="95.8" x2="434" y2="95.8" stroke="#f5951d" stroke-width="1" />
<line x1="429.5" y1="99.9" x2="434" y2="99.9" stroke="#f5951d" stroke-width="1" />
<circle cx="437.4" cy="97.85" r="3.9" fill="#141414" stroke="#f5951d" stroke-width="1.2"/>
<circle cx="437.4" cy="97.85" r="1.4" fill="#f5951d"/>
<line x1="441.5" y1="95.8" x2="448.4" y2="95.8" stroke="#f5951d" stroke-width="1" />
<polygon points="447.2,94 450.2,95.8 447.2,97.6" fill="#f5951d" />
<line x1="441.5" y1="99.9" x2="448.4" y2="99.9" stroke="#f5951d" stroke-width="1" />
<polygon points="447.2,98.1 450.2,99.9 447.2,101.7" fill="#f5951d" />
<rect x="450.4" y="93.2" width="10" height="8.6" fill="#141414" stroke="#f5951d" stroke-width="1.2"/>
<text x="455.6" y="100.2" font-size="5.4" fill="#fff" text-anchor="middle" font-weight="bold" class="px">F1</text>
<line x1="460.6" y1="95.8" x2="467.8" y2="95.8" stroke="#f5951d" stroke-width="1" />
<polygon points="466.6,94 469.6,95.8 466.6,97.6" fill="#f5951d" />
<line x1="460.6" y1="99.9" x2="467.8" y2="99.9" stroke="#f5951d" stroke-width="1" />
<polygon points="466.6,98.1 469.6,99.9 466.6,101.7" fill="#f5951d" />
<rect x="469.8" y="93.2" width="9.8" height="8.6" fill="#141414" stroke="#f5951d" stroke-width="1.2"/>
<path d="M471.5 100 Q474.3 100 474.8 97.8 Q475.3 95.4 478 95.4" fill="none" stroke="#fff" stroke-width="1"/>
<line x1="479.8" y1="95.8" x2="486.7" y2="95.8" stroke="#f5951d" stroke-width="1" />
<polygon points="485.5,94 488.5,95.8 485.5,97.6" fill="#f5951d" />
<line x1="479.8" y1="99.9" x2="486.7" y2="99.9" stroke="#f5951d" stroke-width="1" />
<polygon points="485.5,98.1 488.5,99.9 485.5,101.7" fill="#f5951d" />
<rect x="488.7" y="93.2" width="10.9" height="8.6" fill="#141414" stroke="#f5951d" stroke-width="1.2"/>
<text x="494.35" y="100.2" font-size="5.4" fill="#fff" text-anchor="middle" font-weight="bold" class="px">F2</text>
<line x1="499.8" y1="95.8" x2="507.3" y2="95.8" stroke="#f5951d" stroke-width="1" />
<polygon points="506.1,94 509.1,95.8 506.1,97.6" fill="#f5951d" />
<line x1="499.8" y1="99.9" x2="507.3" y2="99.9" stroke="#f5951d" stroke-width="1" />
<polygon points="506.1,98.1 509.1,99.9 506.1,101.7" fill="#f5951d" />
<path d="M509.5 92.8 L519.6 97.85 L509.5 103 Z" fill="#141414" stroke="#f5951d" stroke-width="1.2"/>
<text x="520.9" y="92.6" font-size="5.4" fill="#fff" text-anchor="middle" font-weight="bold" class="px">A</text>
<line x1="519.6" y1="95.8" x2="530.4" y2="95.8" stroke="#f5951d" stroke-width="1" />
<polygon points="529.2,94 532.2,95.8 529.2,97.6" fill="#f5951d" />
<line x1="519.6" y1="99.9" x2="530.4" y2="99.9" stroke="#f5951d" stroke-width="1" />
<polygon points="529.2,98.1 532.2,99.9 529.2,101.7" fill="#f5951d" />
<rect x="532.4" y="93.2" width="10.2" height="8.6" fill="#141414" stroke="#f5951d" stroke-width="1.2"/>
<path d="M534.4 100 Q534.8 96 540.2 95.6" fill="none" stroke="#fff" stroke-width="1"/>
<line x1="542.8" y1="95.8" x2="548" y2="95.8" stroke="#f5951d" stroke-width="1" />
<polygon points="546.8,94 549.8,95.8 546.8,97.6" fill="#f5951d" />
<line x1="542.8" y1="99.9" x2="548" y2="99.9" stroke="#f5951d" stroke-width="1" />
<polygon points="546.8,98.1 549.8,99.9 546.8,101.7" fill="#f5951d" />
<path d="M520.8 98 V109.2 H484" fill="none" stroke="#f5951d" stroke-width="1"/>
<path d="M523.2 98 V114 H484" fill="none" stroke="#f5951d" stroke-width="1"/>
<polygon points="485.8,107.5 482.6,109.2 485.8,110.9" fill="#f5951d" />
<polygon points="485.8,112.3 482.6,114 485.8,115.7" fill="#f5951d" />
<path d="M481.2 106.2 L471 111.7 L481.2 117.3 Z" fill="#141414" stroke="#f5951d" stroke-width="1.2"/>
<path d="M472.5 109.2 H441 V104.5" fill="none" stroke="#f5951d" stroke-width="1"/>
<path d="M472.5 114 H435.2 V103.5" fill="none" stroke="#f5951d" stroke-width="1"/>
<polygon points="439.3,105.6 441,102.4 442.7,105.6" fill="#f5951d" />
<polygon points="433.5,105.2 435.2,102 436.9,105.2" fill="#f5951d" />
<text x="466.6" y="121.6" font-size="5.4" fill="#fff" text-anchor="middle" font-weight="bold" class="px">FB</text>
<rect x="426.7" y="126.1" width="13.6" height="6.1" fill="#91591a"/>
<text x="433.5" y="131.7" font-size="5.8" fill="#f8e4c4" text-anchor="middle" font-weight="bold" class="px">S 1</text>
<rect x="442.1" y="126.1" width="13.6" height="6.1" fill="#91591a"/>
<text x="448.9" y="131.7" font-size="5.8" fill="#f8e4c4" text-anchor="middle" font-weight="bold" class="px">S 2</text>
<rect x="457.4" y="126.1" width="13.6" height="6.1" fill="#91591a"/>
<text x="464.2" y="131.7" font-size="5.8" fill="#f8e4c4" text-anchor="middle" font-weight="bold" class="px">S 3</text>
<rect x="473.4" y="126.1" width="13.6" height="6.1" fill="#91591a"/>
<text x="480.2" y="131.7" font-size="5.8" fill="#f8e4c4" text-anchor="middle" font-weight="bold" class="px">D 1</text>
<rect x="489.2" y="126.1" width="13.6" height="6.1" fill="#91591a"/>
<text x="496" y="131.7" font-size="5.8" fill="#f8e4c4" text-anchor="middle" font-weight="bold" class="px">D 2</text>
<rect x="505" y="126.1" width="13.9" height="6.1" fill="#91591a"/>
<text x="511.95" y="131.7" font-size="5.3" fill="#f8e4c4" text-anchor="middle" font-weight="bold" class="px">L-R</text>
<rect x="520.5" y="126.1" width="15.6" height="6.1" fill="#91591a"/>
<text x="528.3" y="131.7" font-size="4.9" fill="#f8e4c4" text-anchor="middle" font-weight="bold" class="px">RING</text>
<rect x="537" y="126.1" width="15" height="6.1" fill="#ff9a1a"/>
<text x="544.5" y="131.7" font-size="7.5" fill="#fff" text-anchor="middle" font-weight="bold" class="px">↔</text>
<polygon points="298.5,163 403.5,156.2 403.5,163" fill="#a0a2ab" opacity="0.9"/>
<line x1="293" y1="163" x2="408" y2="163" stroke="#f4f4f4" stroke-width="2" />
<line x1="298.5" y1="156.5" x2="298.5" y2="169.5" stroke="#f4f4f4" stroke-width="1" />
<line x1="403.5" y1="156.5" x2="403.5" y2="169.5" stroke="#f4f4f4" stroke-width="1" />
<text transform="translate(401 172.7) scale(0.92 1)" font-size="9.4" fill="#efeff1" text-anchor="end" stroke="#efeff1" stroke-width="0.22">FM Depth</text>
<rect x="325.4" y="158.4" width="17" height="12.6" rx="4.2" fill="#0c1230" opacity="0.32"/>
<rect x="324.8" y="157.3" width="16.4" height="12.2" fill="url(#hg)" rx="4" stroke="#18224e" stroke-width="1.15"/>
<rect x="327.2" y="159.5" width="11.6" height="7.8" fill="none" rx="2.6" stroke="#8797d8" stroke-width="0.9" opacity="0.7"/>
<line x1="333" y1="159" x2="333" y2="167.8" stroke="#3c4c92" stroke-width="1.1" />
<polygon points="439.5,163 439.5,169.8 492,163" fill="#a0a2ab" opacity="0.9"/>
<polygon points="492,163 544.5,156.2 544.5,163" fill="#a0a2ab" opacity="0.9"/>
<line x1="434.5" y1="163" x2="549.5" y2="163" stroke="#f4f4f4" stroke-width="2" />
<line x1="439.5" y1="156.5" x2="439.5" y2="169.5" stroke="#f4f4f4" stroke-width="1" />
<line x1="544.5" y1="156.5" x2="544.5" y2="169.5" stroke="#f4f4f4" stroke-width="1" />
<text transform="translate(542.5 172.7) scale(0.92 1)" font-size="9.4" fill="#efeff1" text-anchor="end" stroke="#efeff1" stroke-width="0.22">Feedback</text>
<rect x="484.4" y="158.4" width="17" height="12.6" rx="4.2" fill="#0c1230" opacity="0.32"/>
<rect x="483.8" y="157.3" width="16.4" height="12.2" fill="url(#hg)" rx="4" stroke="#18224e" stroke-width="1.15"/>
<rect x="486.2" y="159.5" width="11.6" height="7.8" fill="none" rx="2.6" stroke="#8797d8" stroke-width="0.9" opacity="0.7"/>
<line x1="492" y1="159" x2="492" y2="167.8" stroke="#3c4c92" stroke-width="1.1" />
<rect x="562" y="61.5" width="139" height="117" fill="url(#darkp)" rx="6" stroke="#4a4c57" stroke-width="1"/>
<text transform="translate(630.5 72.7) scale(0.95 1)" font-size="10" fill="#d9dae0" text-anchor="middle">Output</text>
<polygon points="579.5,84 684.5,77.2 684.5,84" fill="#a0a2ab" opacity="0.9"/>
<line x1="574.5" y1="84" x2="689.5" y2="84" stroke="#f4f4f4" stroke-width="2" />
<line x1="579.5" y1="77.5" x2="579.5" y2="90.5" stroke="#f4f4f4" stroke-width="1" />
<line x1="684.5" y1="77.5" x2="684.5" y2="90.5" stroke="#f4f4f4" stroke-width="1" />
<text transform="translate(683 93.7) scale(0.92 1)" font-size="9.4" fill="#efeff1" text-anchor="end" stroke="#efeff1" stroke-width="0.22">Volume</text>
<rect x="642.4" y="79.4" width="17" height="12.6" rx="4.2" fill="#0c1230" opacity="0.32"/>
<rect x="641.8" y="78.3" width="16.4" height="12.2" fill="url(#hg)" rx="4" stroke="#18224e" stroke-width="1.15"/>
<rect x="644.2" y="80.5" width="11.6" height="7.8" fill="none" rx="2.6" stroke="#8797d8" stroke-width="0.9" opacity="0.7"/>
<line x1="650" y1="80" x2="650" y2="88.8" stroke="#3c4c92" stroke-width="1.1" />
<polygon points="579.5,104 579.5,110.8 632,104" fill="#a0a2ab" opacity="0.9"/>
<polygon points="632,104 684.5,97.2 684.5,104" fill="#a0a2ab" opacity="0.9"/>
<line x1="574.5" y1="104" x2="689.5" y2="104" stroke="#f4f4f4" stroke-width="2" />
<line x1="579.5" y1="97.5" x2="579.5" y2="110.5" stroke="#f4f4f4" stroke-width="1" />
<line x1="684.5" y1="97.5" x2="684.5" y2="110.5" stroke="#f4f4f4" stroke-width="1" />
<text transform="translate(683 113.7) scale(0.92 1)" font-size="9.4" fill="#efeff1" text-anchor="end" stroke="#efeff1" stroke-width="0.22">Pan</text>
<rect x="624.4" y="99.4" width="17" height="12.6" rx="4.2" fill="#0c1230" opacity="0.32"/>
<rect x="623.8" y="98.3" width="16.4" height="12.2" fill="url(#hg)" rx="4" stroke="#18224e" stroke-width="1.15"/>
<rect x="626.2" y="100.5" width="11.6" height="7.8" fill="none" rx="2.6" stroke="#8797d8" stroke-width="0.9" opacity="0.7"/>
<line x1="632" y1="100" x2="632" y2="108.8" stroke="#3c4c92" stroke-width="1.1" />
<polygon points="579.5,124 579.5,130.8 632,124" fill="#a0a2ab" opacity="0.9"/>
<polygon points="632,124 684.5,117.2 684.5,124" fill="#a0a2ab" opacity="0.9"/>
<line x1="574.5" y1="124" x2="689.5" y2="124" stroke="#f4f4f4" stroke-width="2" />
<line x1="579.5" y1="117.5" x2="579.5" y2="130.5" stroke="#f4f4f4" stroke-width="1" />
<line x1="684.5" y1="117.5" x2="684.5" y2="130.5" stroke="#f4f4f4" stroke-width="1" />
<line x1="632" y1="121" x2="632" y2="127" stroke="#f4f4f4" stroke-width="1" />
<text transform="translate(683 133.7) scale(0.92 1)" font-size="9.4" fill="#efeff1" text-anchor="end" stroke="#efeff1" stroke-width="0.22">Width</text>
<rect x="676.9" y="119.4" width="17" height="12.6" rx="4.2" fill="#0c1230" opacity="0.32"/>
<rect x="676.3" y="118.3" width="16.4" height="12.2" fill="url(#hg)" rx="4" stroke="#18224e" stroke-width="1.15"/>
<rect x="678.7" y="120.5" width="11.6" height="7.8" fill="none" rx="2.6" stroke="#8797d8" stroke-width="0.9" opacity="0.7"/>
<line x1="684.5" y1="120" x2="684.5" y2="128.8" stroke="#3c4c92" stroke-width="1.1" />
<polygon points="579.5,143 684.5,136.2 684.5,143" fill="#a0a2ab" opacity="0.9"/>
<line x1="574.5" y1="143" x2="689.5" y2="143" stroke="#f4f4f4" stroke-width="2" />
<line x1="579.5" y1="136.5" x2="579.5" y2="149.5" stroke="#f4f4f4" stroke-width="1" />
<line x1="684.5" y1="136.5" x2="684.5" y2="149.5" stroke="#f4f4f4" stroke-width="1" />
<text transform="translate(683 152.7) scale(0.92 1)" font-size="9.4" fill="#efeff1" text-anchor="end" stroke="#efeff1" stroke-width="0.22">FX1 Send</text>
<rect x="625.4" y="138.4" width="17" height="12.6" rx="4.2" fill="#0c1230" opacity="0.32"/>
<rect x="624.8" y="137.3" width="16.4" height="12.2" fill="url(#hg)" rx="4" stroke="#18224e" stroke-width="1.15"/>
<rect x="627.2" y="139.5" width="11.6" height="7.8" fill="none" rx="2.6" stroke="#8797d8" stroke-width="0.9" opacity="0.7"/>
<line x1="633" y1="139" x2="633" y2="147.8" stroke="#3c4c92" stroke-width="1.1" />
<polygon points="579.5,163 684.5,156.2 684.5,163" fill="#a0a2ab" opacity="0.9"/>
<line x1="579" y1="163" x2="689.5" y2="163" stroke="#f4f4f4" stroke-width="2" />
<line x1="579.5" y1="156.5" x2="579.5" y2="169.5" stroke="#f4f4f4" stroke-width="1" />
<line x1="684.5" y1="156.5" x2="684.5" y2="169.5" stroke="#f4f4f4" stroke-width="1" />
<text transform="translate(683 172.7) scale(0.92 1)" font-size="9.4" fill="#efeff1" text-anchor="end" stroke="#efeff1" stroke-width="0.22">FX2 Send</text>
<rect x="572.1" y="158.4" width="17" height="12.6" rx="4.2" fill="#0c1230" opacity="0.32"/>
<rect x="571.5" y="157.3" width="16.4" height="12.2" fill="url(#hg)" rx="4" stroke="#18224e" stroke-width="1.15"/>
<rect x="573.9" y="159.5" width="11.6" height="7.8" fill="none" rx="2.6" stroke="#8797d8" stroke-width="0.9" opacity="0.7"/>
<line x1="579.7" y1="159" x2="579.7" y2="167.8" stroke="#3c4c92" stroke-width="1.1" />
<path d="M141 197.5 V187 Q141 181 147 181 H273 Q279 181 279 187 V197.5 Z" fill="#1b1b1c" stroke="#3a3b42" stroke-width="1"/>
<path d="M141 197.5 H279 V237.5 Q279 243.5 273 243.5 H147 Q141 243.5 141 237.5 Z" fill="url(#lightp)"/>
<text x="145.5" y="192.4" font-size="9.9" fill="#ff9a1a" stroke="#ff9a1a" stroke-width="0.45">Scene</text>
<text x="197.5" y="190.6" font-size="5.8" fill="#f0951f" text-anchor="middle" font-weight="bold" class="px">-3</text>
<text x="209.5" y="190.6" font-size="5.8" fill="#f0951f" text-anchor="middle" font-weight="bold" class="px">-2</text>
<text x="221.5" y="190.6" font-size="5.8" fill="#f0951f" text-anchor="middle" font-weight="bold" class="px">-1</text>
<rect x="228.3" y="182.6" width="11.4" height="10.6" fill="#ff9a1a"/>
<text x="234" y="190.6" font-size="5.8" fill="#1a1208" text-anchor="middle" font-weight="bold" class="px">0</text>
<text x="246" y="190.6" font-size="5.8" fill="#f0951f" text-anchor="middle" font-weight="bold" class="px">+1</text>
<text x="258.5" y="190.6" font-size="5.8" fill="#f0951f" text-anchor="middle" font-weight="bold" class="px">+2</text>
<text x="270" y="190.6" font-size="5.8" fill="#f0951f" text-anchor="middle" font-weight="bold" class="px">+3</text>
<rect x="157.5" y="211" width="7.5" height="3.99" fill="#8f9099" opacity="0.9"/>
<line x1="157.5" y1="211" x2="157.5" y2="214.2" stroke="#1b2a6b" stroke-width="0.8" />
<rect x="165" y="211" width="7.5" height="3.38" fill="#8f9099" opacity="0.9"/>
<line x1="165" y1="211" x2="165" y2="214.2" stroke="#1b2a6b" stroke-width="0.8" />
<rect x="172.5" y="211" width="7.5" height="2.76" fill="#8f9099" opacity="0.9"/>
<line x1="172.5" y1="211" x2="172.5" y2="214.2" stroke="#1b2a6b" stroke-width="0.8" />
<rect x="180" y="211" width="7.5" height="2.15" fill="#8f9099" opacity="0.9"/>
<line x1="180" y1="211" x2="180" y2="213.75" stroke="#1b2a6b" stroke-width="0.8" />
<rect x="187.5" y="211" width="7.5" height="1.54" fill="#8f9099" opacity="0.9"/>
<line x1="187.5" y1="211" x2="187.5" y2="213.14" stroke="#1b2a6b" stroke-width="0.8" />
<rect x="195" y="211" width="7.5" height="0.92" fill="#8f9099" opacity="0.9"/>
<line x1="195" y1="211" x2="195" y2="212.52" stroke="#1b2a6b" stroke-width="0.8" />
<rect x="202.5" y="211" width="7.5" height="0.31" fill="#8f9099" opacity="0.9"/>
<line x1="202.5" y1="211" x2="202.5" y2="211.91" stroke="#1b2a6b" stroke-width="0.8" />
<rect x="210" y="210.69" width="7.5" height="0.31" fill="#8f9099" opacity="0.9"/>
<line x1="217.5" y1="210.09" x2="217.5" y2="211" stroke="#1b2a6b" stroke-width="0.8" />
<rect x="217.5" y="210.08" width="7.5" height="0.92" fill="#8f9099" opacity="0.9"/>
<line x1="225" y1="209.48" x2="225" y2="211" stroke="#1b2a6b" stroke-width="0.8" />
<rect x="225" y="209.46" width="7.5" height="1.54" fill="#8f9099" opacity="0.9"/>
<line x1="232.5" y1="208.86" x2="232.5" y2="211" stroke="#1b2a6b" stroke-width="0.8" />
<rect x="232.5" y="208.85" width="7.5" height="2.15" fill="#8f9099" opacity="0.9"/>
<line x1="240" y1="208.25" x2="240" y2="211" stroke="#1b2a6b" stroke-width="0.8" />
<rect x="240" y="208.24" width="7.5" height="2.76" fill="#8f9099" opacity="0.9"/>
<line x1="247.5" y1="207.8" x2="247.5" y2="211" stroke="#1b2a6b" stroke-width="0.8" />
<rect x="247.5" y="207.62" width="7.5" height="3.38" fill="#8f9099" opacity="0.9"/>
<line x1="255" y1="207.8" x2="255" y2="211" stroke="#1b2a6b" stroke-width="0.8" />
<rect x="255" y="207.01" width="7.5" height="3.99" fill="#8f9099" opacity="0.9"/>
<line x1="262.5" y1="207.8" x2="262.5" y2="211" stroke="#1b2a6b" stroke-width="0.8" />
<line x1="152.5" y1="211" x2="267.5" y2="211" stroke="#1b2a6b" stroke-width="2" />
<text transform="translate(260 220.7) scale(0.92 1)" font-size="9.4" fill="#1a1a1a" text-anchor="end" stroke="#1a1a1a" stroke-width="0.22">Pitch</text>
<rect x="202.4" y="206.4" width="17" height="12.6" rx="4.2" fill="#0c1230" opacity="0.32"/>
<rect x="201.8" y="205.3" width="16.4" height="12.2" fill="url(#hg)" rx="4" stroke="#18224e" stroke-width="1.15"/>
<rect x="204.2" y="207.5" width="11.6" height="7.8" fill="none" rx="2.6" stroke="#8797d8" stroke-width="0.9" opacity="0.7"/>
<line x1="210" y1="207" x2="210" y2="215.8" stroke="#3c4c92" stroke-width="1.1" />
<polygon points="157.5,230 262.5,223.2 262.5,230" fill="#9a9ba3" opacity="0.9"/>
<line x1="157" y1="230" x2="267.5" y2="230" stroke="#101010" stroke-width="2" />
<line x1="157.5" y1="223.5" x2="157.5" y2="236.5" stroke="#101010" stroke-width="1" />
<line x1="262.5" y1="223.5" x2="262.5" y2="236.5" stroke="#101010" stroke-width="1" />
<text transform="translate(260 239.7) scale(0.92 1)" font-size="9.4" fill="#1a1a1a" text-anchor="end" stroke="#1a1a1a" stroke-width="0.22">Portamento</text>
<rect x="150.4" y="225.4" width="17" height="12.6" rx="4.2" fill="#0c1230" opacity="0.32"/>
<rect x="149.8" y="224.3" width="16.4" height="12.2" fill="url(#hg)" rx="4" stroke="#18224e" stroke-width="1.15"/>
<rect x="152.2" y="226.5" width="11.6" height="7.8" fill="none" rx="2.6" stroke="#8797d8" stroke-width="0.9" opacity="0.7"/>
<line x1="158" y1="226" x2="158" y2="234.8" stroke="#3c4c92" stroke-width="1.1" />
<path d="M281.5 197.5 V187 Q281.5 181 287.5 181 H695 Q701 181 701 187 V197.5 Z" fill="#1b1b1c" stroke="#3a3b42" stroke-width="1"/>
<path d="M281.5 197.5 H701 V237.5 Q701 243.5 695 243.5 H287.5 Q281.5 243.5 281.5 237.5 Z" fill="url(#lightp)"/>
<line x1="420.5" y1="203" x2="420.5" y2="238" stroke="#b4b7c8" stroke-width="1" />
<line x1="560.8" y1="203" x2="560.8" y2="238" stroke="#b4b7c8" stroke-width="1" />
<g transform="translate(291.3 189.7) scale(0.94) translate(-291.3 -189.7)">
<line x1="287.7" y1="188.6" x2="294.9" y2="188.6" stroke="#f5951d" stroke-width="1.5" />
</g>
<rect x="297.55" y="184.3" width="10" height="10" fill="#ff9a1a"/>
<g transform="translate(302.55 189.7) scale(0.94) translate(-302.55 -189.7)">
<path d="M298.95 187.6 H303.35 Q305.55 187.8 305.95 192.6" fill="none" stroke="#1a1208" stroke-width="1.35"/>
</g>
<g transform="translate(313.8 189.7) scale(0.94) translate(-313.8 -189.7)">
<path d="M310.2 189.4 H314.4 Q316.6 189.6 317 193.3" fill="none" stroke="#f5951d" stroke-width="1.35"/>
<path d="M314.7 187.4 L316.8 185" fill="none" stroke="#f5951d" stroke-width="1.35"/>
</g>
<g transform="translate(325.05 189.7) scale(0.94) translate(-325.05 -189.7)">
<path d="M321.45 189.4 H325.65 Q327.85 189.6 328.25 193.3" fill="none" stroke="#f5951d" stroke-width="1.35"/>
<path d="M326.45 187.8 V184.6 M324.85 186.2 H328.05" fill="none" stroke="#f5951d" stroke-width="1.1"/>
</g>
<g transform="translate(336.3 189.7) scale(0.94) translate(-336.3 -189.7)">
<path d="M332.9 193.2 Q333.5 188.6 336.5 188 H339.9" fill="none" stroke="#f5951d" stroke-width="1.35"/>
</g>
<g transform="translate(347.55 189.7) scale(0.94) translate(-347.55 -189.7)">
<path d="M344.35 193.3 Q344.95 189.6 347.75 189.2 H351.35" fill="none" stroke="#f5951d" stroke-width="1.35"/>
<path d="M346.95 187.4 L344.75 185" fill="none" stroke="#f5951d" stroke-width="1.35"/>
</g>
<g transform="translate(358.8 189.7) scale(0.94) translate(-358.8 -189.7)">
<path d="M355 193.2 Q358.8 185.6 362.6 193.2" fill="none" stroke="#f5951d" stroke-width="1.35"/>
</g>
<g transform="translate(370.05 189.7) scale(0.94) translate(-370.05 -189.7)">
<path d="M366.05 187.6 H367.65 L370.05 192.8 L372.45 187.6 H374.05" fill="none" stroke="#f5951d" stroke-width="1.35"/>
</g>
<g transform="translate(381.3 189.7) scale(0.94) translate(-381.3 -189.7)">
<path d="M377.9 193 V189.6 Q379.6 187.4 381.3 189.6 V192.4 V189.6 Q383 187.4 384.7 189.6 V193" fill="none" stroke="#f5951d" stroke-width="1.15"/>
</g>
<g transform="translate(392.55 189.7) scale(0.94) translate(-392.55 -189.7)">
<text x="392.55" y="193.4" font-size="8.6" fill="#f5951d" text-anchor="middle" font-weight="bold" class="px">⅝</text>
</g>
<rect x="404.9" y="184.3" width="10" height="10" fill="#ff9a1a"/>
<text x="410.2" y="192.2" font-size="5.6" fill="#1a1208" text-anchor="middle" font-weight="bold" class="px">1</text>
<polygon points="418.7,189.5 422.7,186.5 422.7,192.5" fill="#f5951d" />
<text transform="translate(426 192.7) scale(0.9 1)" font-size="9.8" fill="#f5951d" font-weight="bold">Filter 1</text>
<text transform="translate(527 192.7) scale(0.9 1)" font-size="9.8" fill="#f5951d" font-weight="bold">Filter 2</text>
<polygon points="563.3,189.5 559.2,186.5 559.2,192.5" fill="#f5951d" />
<rect x="568" y="184.3" width="10" height="10" fill="#ff9a1a"/>
<g transform="translate(573 189.7) scale(0.94) translate(-573 -189.7)">
<line x1="569.4" y1="188.6" x2="576.6" y2="188.6" stroke="#1a1208" stroke-width="1.5" />
</g>
<g transform="translate(584.17 189.7) scale(0.94) translate(-584.17 -189.7)">
<path d="M580.57 187.6 H584.97 Q587.17 187.8 587.57 192.6" fill="none" stroke="#f5951d" stroke-width="1.35"/>
</g>
<g transform="translate(595.34 189.7) scale(0.94) translate(-595.34 -189.7)">
<path d="M591.74 189.4 H595.94 Q598.14 189.6 598.54 193.3" fill="none" stroke="#f5951d" stroke-width="1.35"/>
<path d="M596.24 187.4 L598.34 185" fill="none" stroke="#f5951d" stroke-width="1.35"/>
</g>
<g transform="translate(606.51 189.7) scale(0.94) translate(-606.51 -189.7)">
<path d="M602.91 189.4 H607.11 Q609.31 189.6 609.71 193.3" fill="none" stroke="#f5951d" stroke-width="1.35"/>
<path d="M607.91 187.8 V184.6 M606.31 186.2 H609.51" fill="none" stroke="#f5951d" stroke-width="1.1"/>
</g>
<g transform="translate(617.68 189.7) scale(0.94) translate(-617.68 -189.7)">
<path d="M614.28 193.2 Q614.88 188.6 617.88 188 H621.28" fill="none" stroke="#f5951d" stroke-width="1.35"/>
</g>
<g transform="translate(628.85 189.7) scale(0.94) translate(-628.85 -189.7)">
<path d="M625.65 193.3 Q626.25 189.6 629.05 189.2 H632.65" fill="none" stroke="#f5951d" stroke-width="1.35"/>
<path d="M628.25 187.4 L626.05 185" fill="none" stroke="#f5951d" stroke-width="1.35"/>
</g>
<g transform="translate(640.02 189.7) scale(0.94) translate(-640.02 -189.7)">
<path d="M636.22 193.2 Q640.02 185.6 643.82 193.2" fill="none" stroke="#f5951d" stroke-width="1.35"/>
</g>
<g transform="translate(651.19 189.7) scale(0.94) translate(-651.19 -189.7)">
<path d="M647.19 187.6 H648.79 L651.19 192.8 L653.59 187.6 H655.19" fill="none" stroke="#f5951d" stroke-width="1.35"/>
</g>
<g transform="translate(662.36 189.7) scale(0.94) translate(-662.36 -189.7)">
<path d="M658.96 193 V189.6 Q660.66 187.4 662.36 189.6 V192.4 V189.6 Q664.06 187.4 665.76 189.6 V193" fill="none" stroke="#f5951d" stroke-width="1.15"/>
</g>
<g transform="translate(673.53 189.7) scale(0.94) translate(-673.53 -189.7)">
<text x="673.53" y="193.4" font-size="8.6" fill="#f5951d" text-anchor="middle" font-weight="bold" class="px">⅝</text>
</g>
<polygon points="298.5,211 403.5,204.2 403.5,211" fill="#6f88dc" opacity="0.9"/>
<line x1="293" y1="211" x2="408" y2="211" stroke="#3450b8" stroke-width="2" />
<line x1="298.5" y1="204.5" x2="298.5" y2="217.5" stroke="#3450b8" stroke-width="1" />
<line x1="403.5" y1="204.5" x2="403.5" y2="217.5" stroke="#3450b8" stroke-width="1" />
<text transform="translate(401.5 220.7) scale(0.92 1)" font-size="9.4" fill="#1a1a1a" text-anchor="end" stroke="#1a1a1a" stroke-width="0.22">Cutoff</text>
<rect x="334.3" y="205.3" width="16.4" height="12.2" fill="#b9bac2" rx="4" stroke="#7d7f8c" stroke-width="1" opacity="0.75"/>
<line x1="342.5" y1="207.2" x2="342.5" y2="215.6" stroke="#777" stroke-width="1" opacity="0.7"/>
<rect x="370.4" y="206.4" width="17" height="12.6" rx="4.2" fill="#0c1230" opacity="0.32"/>
<rect x="369.8" y="205.3" width="16.4" height="12.2" fill="url(#hg)" rx="4" stroke="#18224e" stroke-width="1.15"/>
<rect x="372.2" y="207.5" width="11.6" height="7.8" fill="none" rx="2.6" stroke="#8797d8" stroke-width="0.9" opacity="0.7"/>
<line x1="378" y1="207" x2="378" y2="215.8" stroke="#3c4c92" stroke-width="1.1" />
<polygon points="298.5,230 403.5,223.2 403.5,230" fill="#9a9ba3" opacity="0.9"/>
<line x1="293" y1="230" x2="408" y2="230" stroke="#101010" stroke-width="2" />
<line x1="298.5" y1="223.5" x2="298.5" y2="236.5" stroke="#101010" stroke-width="1" />
<line x1="403.5" y1="223.5" x2="403.5" y2="236.5" stroke="#101010" stroke-width="1" />
<text transform="translate(401.5 239.7) scale(0.92 1)" font-size="9.4" fill="#1a1a1a" text-anchor="end" stroke="#1a1a1a" stroke-width="0.22">Resonance</text>
<rect x="358.4" y="225.4" width="17" height="12.6" rx="4.2" fill="#0c1230" opacity="0.32"/>
<rect x="357.8" y="224.3" width="16.4" height="12.2" fill="url(#hg)" rx="4" stroke="#18224e" stroke-width="1.15"/>
<rect x="360.2" y="226.5" width="11.6" height="7.8" fill="none" rx="2.6" stroke="#8797d8" stroke-width="0.9" opacity="0.7"/>
<line x1="366" y1="226" x2="366" y2="234.8" stroke="#3c4c92" stroke-width="1.1" />
<polygon points="438.5,221 438.5,227.8 491,221" fill="#9a9ba3" opacity="0.9"/>
<polygon points="491,221 543.5,214.2 543.5,221" fill="#9a9ba3" opacity="0.9"/>
<line x1="433.3" y1="221" x2="548.3" y2="221" stroke="#101010" stroke-width="2" />
<line x1="438.5" y1="214.5" x2="438.5" y2="227.5" stroke="#101010" stroke-width="1" />
<line x1="543.5" y1="214.5" x2="543.5" y2="227.5" stroke="#101010" stroke-width="1" />
<text transform="translate(541.3 230.7) scale(0.92 1)" font-size="9.4" fill="#1a1a1a" text-anchor="end" stroke="#1a1a1a" stroke-width="0.22"></text>
<rect x="483.9" y="216.4" width="17" height="12.6" rx="4.2" fill="#0c1230" opacity="0.32"/>
<rect x="483.3" y="215.3" width="16.4" height="12.2" fill="url(#hg)" rx="4" stroke="#18224e" stroke-width="1.15"/>
<rect x="485.7" y="217.5" width="11.6" height="7.8" fill="none" rx="2.6" stroke="#8797d8" stroke-width="0.9" opacity="0.7"/>
<line x1="491.5" y1="217" x2="491.5" y2="225.8" stroke="#3c4c92" stroke-width="1.1" />
<text transform="translate(443 232) scale(0.92 1)" font-size="9.4" fill="#1a1a1a">F1</text>
<text transform="translate(541 232) scale(0.92 1)" font-size="9.4" fill="#1a1a1a" text-anchor="end">F2</text>
<polygon points="579.5,211 684.5,204.2 684.5,211" fill="#9a9ba3" opacity="0.9"/>
<line x1="574.5" y1="211" x2="689.5" y2="211" stroke="#101010" stroke-width="2" />
<line x1="579.5" y1="204.5" x2="579.5" y2="217.5" stroke="#101010" stroke-width="1" />
<line x1="684.5" y1="204.5" x2="684.5" y2="217.5" stroke="#101010" stroke-width="1" />
<text transform="translate(683 220.7) scale(0.92 1)" font-size="9.4" fill="#1a1a1a" text-anchor="end" stroke="#1a1a1a" stroke-width="0.22">Cutoff</text>
<rect x="608.1" y="206.4" width="17" height="12.6" rx="4.2" fill="#0c1230" opacity="0.32"/>
<rect x="607.5" y="205.3" width="16.4" height="12.2" fill="url(#hg)" rx="4" stroke="#18224e" stroke-width="1.15"/>
<rect x="609.9" y="207.5" width="11.6" height="7.8" fill="none" rx="2.6" stroke="#8797d8" stroke-width="0.9" opacity="0.7"/>
<line x1="615.7" y1="207" x2="615.7" y2="215.8" stroke="#3c4c92" stroke-width="1.1" />
<polygon points="579.5,230 684.5,223.2 684.5,230" fill="#9a9ba3" opacity="0.9"/>
<line x1="579" y1="230" x2="689.5" y2="230" stroke="#101010" stroke-width="2" />
<line x1="579.5" y1="223.5" x2="579.5" y2="236.5" stroke="#101010" stroke-width="1" />
<line x1="684.5" y1="223.5" x2="684.5" y2="236.5" stroke="#101010" stroke-width="1" />
<text transform="translate(683 239.7) scale(0.92 1)" font-size="9.4" fill="#1a1a1a" text-anchor="end" stroke="#1a1a1a" stroke-width="0.22">Resonance</text>
<rect x="571.9" y="225.4" width="17" height="12.6" rx="4.2" fill="#0c1230" opacity="0.32"/>
<rect x="571.3" y="224.3" width="16.4" height="12.2" fill="url(#hg)" rx="4" stroke="#18224e" stroke-width="1.15"/>
<rect x="573.7" y="226.5" width="11.6" height="7.8" fill="none" rx="2.6" stroke="#8797d8" stroke-width="0.9" opacity="0.7"/>
<line x1="579.5" y1="226" x2="579.5" y2="234.8" stroke="#3c4c92" stroke-width="1.1" />
<circle cx="692.3" cy="210.5" r="4.6" fill="#e9e9ec" stroke="#3a3a40" stroke-width="1"/>
<text x="692.4" y="212.6" font-size="5.4" fill="#111" text-anchor="middle" font-weight="bold" class="px">R</text>
<circle cx="692.3" cy="230" r="4.6" fill="#e9e9ec" stroke="#3a3a40" stroke-width="1"/>
<text x="692.4" y="232.1" font-size="5.4" fill="#111" text-anchor="middle" font-weight="bold" class="px">L</text>
<rect x="141" y="246" width="138" height="125" fill="url(#darkp)" rx="6" stroke="#4a4c57" stroke-width="1"/>
<rect x="147.4" y="251" width="13.2" height="6.4" fill="url(#mgry)"/>
<text x="154" y="256.3" font-size="4.8" fill="#5c5d63" text-anchor="middle" font-weight="bold" class="px">M</text>
<rect x="147.4" y="260.4" width="13.2" height="6" fill="url(#mgry)"/>
<text x="154" y="265.5" font-size="4.8" fill="#3a3b40" text-anchor="middle" font-weight="bold" class="px">S</text>
<rect x="147.4" y="269.8" width="13.2" height="7.2" fill="#107a1c" rx="1"/>
<rect x="152.1" y="270.4" width="3.8" height="6" fill="#36d844" rx="0.8"/>
<polygon points="154,289.5 160.8,289.5 154,341.5" fill="#a0a2ab" opacity="0.85"/>
<line x1="154" y1="280.8" x2="154" y2="348.5" stroke="#f4f4f4" stroke-width="2" />
<line x1="147.5" y1="289.5" x2="160.5" y2="289.5" stroke="#f4f4f4" stroke-width="1" />
<line x1="147.5" y1="341.5" x2="160.5" y2="341.5" stroke="#f4f4f4" stroke-width="1" />
<rect x="148.8" y="282.1" width="12.4" height="17" rx="4" fill="#0c1230" opacity="0.32"/>
<rect x="147.9" y="281" width="12.2" height="16.6" fill="url(#hg)" rx="4" stroke="#18224e" stroke-width="1.15"/>
<rect x="150.1" y="283.4" width="7.8" height="11.8" fill="none" rx="2.6" stroke="#8797d8" stroke-width="0.9" opacity="0.7"/>
<line x1="149.6" y1="289.3" x2="158.4" y2="289.3" stroke="#3c4c92" stroke-width="1.1" />
<text transform="translate(154 361) scale(0.95 1)" font-size="9.8" fill="#e6e6ea" text-anchor="middle" stroke="#e6e6ea" stroke-width="0.15">1</text>
<rect x="166" y="251" width="13.2" height="6.4" fill="url(#mred)"/>
<text x="172.6" y="256.3" font-size="4.8" fill="#b0463c" text-anchor="middle" font-weight="bold" class="px">M</text>
<rect x="166" y="260.4" width="13.2" height="6" fill="url(#mgry)"/>
<text x="172.6" y="265.5" font-size="4.8" fill="#3a3b40" text-anchor="middle" font-weight="bold" class="px">S</text>
<rect x="166" y="269.8" width="13.2" height="7.2" fill="#107a1c" rx="1"/>
<rect x="170.7" y="270.4" width="3.8" height="6" fill="#36d844" rx="0.8"/>
<polygon points="173,289.5 179.8,289.5 173,341.5" fill="#a0a2ab" opacity="0.85"/>
<line x1="173" y1="280.8" x2="173" y2="348.5" stroke="#f4f4f4" stroke-width="2" />
<line x1="166.5" y1="289.5" x2="179.5" y2="289.5" stroke="#f4f4f4" stroke-width="1" />
<line x1="166.5" y1="341.5" x2="179.5" y2="341.5" stroke="#f4f4f4" stroke-width="1" />
<rect x="167.8" y="282.1" width="12.4" height="17" rx="4" fill="#0c1230" opacity="0.32"/>
<rect x="166.9" y="281" width="12.2" height="16.6" fill="url(#hg)" rx="4" stroke="#18224e" stroke-width="1.15"/>
<rect x="169.1" y="283.4" width="7.8" height="11.8" fill="none" rx="2.6" stroke="#8797d8" stroke-width="0.9" opacity="0.7"/>
<line x1="168.6" y1="289.3" x2="177.4" y2="289.3" stroke="#3c4c92" stroke-width="1.1" />
<text transform="translate(172.6 361) scale(0.95 1)" font-size="9.8" fill="#e6e6ea" text-anchor="middle" stroke="#e6e6ea" stroke-width="0.15">2</text>
<rect x="184.6" y="251" width="13.2" height="6.4" fill="url(#mred)"/>
<text x="191.2" y="256.3" font-size="4.8" fill="#b0463c" text-anchor="middle" font-weight="bold" class="px">M</text>
<rect x="184.6" y="260.4" width="13.2" height="6" fill="url(#mgry)"/>
<text x="191.2" y="265.5" font-size="4.8" fill="#3a3b40" text-anchor="middle" font-weight="bold" class="px">S</text>
<rect x="184.6" y="269.8" width="13.2" height="7.2" fill="#107a1c" rx="1"/>
<rect x="189.3" y="270.4" width="3.8" height="6" fill="#36d844" rx="0.8"/>
<polygon points="191,289.5 197.8,289.5 191,341.5" fill="#a0a2ab" opacity="0.85"/>
<line x1="191" y1="280.8" x2="191" y2="348.5" stroke="#f4f4f4" stroke-width="2" />
<line x1="184.5" y1="289.5" x2="197.5" y2="289.5" stroke="#f4f4f4" stroke-width="1" />
<line x1="184.5" y1="341.5" x2="197.5" y2="341.5" stroke="#f4f4f4" stroke-width="1" />
<rect x="185.8" y="282.1" width="12.4" height="17" rx="4" fill="#0c1230" opacity="0.32"/>
<rect x="184.9" y="281" width="12.2" height="16.6" fill="url(#hg)" rx="4" stroke="#18224e" stroke-width="1.15"/>
<rect x="187.1" y="283.4" width="7.8" height="11.8" fill="none" rx="2.6" stroke="#8797d8" stroke-width="0.9" opacity="0.7"/>
<line x1="186.6" y1="289.3" x2="195.4" y2="289.3" stroke="#3c4c92" stroke-width="1.1" />
<text transform="translate(191.2 361) scale(0.95 1)" font-size="9.8" fill="#e6e6ea" text-anchor="middle" stroke="#e6e6ea" stroke-width="0.15">3</text>
<rect x="203.4" y="251" width="13.2" height="6.4" fill="url(#mred)"/>
<text x="210" y="256.3" font-size="4.8" fill="#b0463c" text-anchor="middle" font-weight="bold" class="px">M</text>
<rect x="203.4" y="260.4" width="13.2" height="6" fill="url(#mgry)"/>
<text x="210" y="265.5" font-size="4.8" fill="#3a3b40" text-anchor="middle" font-weight="bold" class="px">S</text>
<rect x="203.4" y="269.8" width="13.2" height="7.2" fill="#107a1c" rx="1"/>
<rect x="208.1" y="270.4" width="3.8" height="6" fill="#36d844" rx="0.8"/>
<polygon points="210,289.5 216.8,289.5 210,341.5" fill="#a0a2ab" opacity="0.85"/>
<line x1="210" y1="280.8" x2="210" y2="348.5" stroke="#f4f4f4" stroke-width="2" />
<line x1="203.5" y1="289.5" x2="216.5" y2="289.5" stroke="#f4f4f4" stroke-width="1" />
<line x1="203.5" y1="341.5" x2="216.5" y2="341.5" stroke="#f4f4f4" stroke-width="1" />
<rect x="204.8" y="282.1" width="12.4" height="17" rx="4" fill="#0c1230" opacity="0.32"/>
<rect x="203.9" y="281" width="12.2" height="16.6" fill="url(#hg)" rx="4" stroke="#18224e" stroke-width="1.15"/>
<rect x="206.1" y="283.4" width="7.8" height="11.8" fill="none" rx="2.6" stroke="#8797d8" stroke-width="0.9" opacity="0.7"/>
<line x1="205.6" y1="289.3" x2="214.4" y2="289.3" stroke="#3c4c92" stroke-width="1.1" />
<text transform="translate(210 361) scale(0.95 1)" font-size="9.8" fill="#e6e6ea" text-anchor="middle" stroke="#e6e6ea" stroke-width="0.15">1×2</text>
<rect x="222.1" y="251" width="13.2" height="6.4" fill="url(#mred)"/>
<text x="228.7" y="256.3" font-size="4.8" fill="#b0463c" text-anchor="middle" font-weight="bold" class="px">M</text>
<rect x="222.1" y="260.4" width="13.2" height="6" fill="url(#mgry)"/>
<text x="228.7" y="265.5" font-size="4.8" fill="#3a3b40" text-anchor="middle" font-weight="bold" class="px">S</text>
<rect x="222.1" y="269.8" width="13.2" height="7.2" fill="#107a1c" rx="1"/>
<rect x="226.8" y="270.4" width="3.8" height="6" fill="#36d844" rx="0.8"/>
<polygon points="229,289.5 235.8,289.5 229,341.5" fill="#a0a2ab" opacity="0.85"/>
<line x1="229" y1="280.8" x2="229" y2="348.5" stroke="#f4f4f4" stroke-width="2" />
<line x1="222.5" y1="289.5" x2="235.5" y2="289.5" stroke="#f4f4f4" stroke-width="1" />
<line x1="222.5" y1="341.5" x2="235.5" y2="341.5" stroke="#f4f4f4" stroke-width="1" />
<rect x="223.8" y="282.1" width="12.4" height="17" rx="4" fill="#0c1230" opacity="0.32"/>
<rect x="222.9" y="281" width="12.2" height="16.6" fill="url(#hg)" rx="4" stroke="#18224e" stroke-width="1.15"/>
<rect x="225.1" y="283.4" width="7.8" height="11.8" fill="none" rx="2.6" stroke="#8797d8" stroke-width="0.9" opacity="0.7"/>
<line x1="224.6" y1="289.3" x2="233.4" y2="289.3" stroke="#3c4c92" stroke-width="1.1" />
<text transform="translate(228.7 361) scale(0.95 1)" font-size="9.8" fill="#e6e6ea" text-anchor="middle" stroke="#e6e6ea" stroke-width="0.15">2×3</text>
<rect x="240.9" y="251" width="13.2" height="6.4" fill="url(#mred)"/>
<text x="247.5" y="256.3" font-size="4.8" fill="#b0463c" text-anchor="middle" font-weight="bold" class="px">M</text>
<rect x="240.9" y="260.4" width="13.2" height="6" fill="url(#mgry)"/>
<text x="247.5" y="265.5" font-size="4.8" fill="#3a3b40" text-anchor="middle" font-weight="bold" class="px">S</text>
<rect x="240.9" y="269.8" width="13.2" height="7.2" fill="#107a1c" rx="1"/>
<rect x="245.6" y="270.4" width="3.8" height="6" fill="#36d844" rx="0.8"/>
<polygon points="248,289.5 254.8,289.5 248,341.5" fill="#a0a2ab" opacity="0.85"/>
<line x1="248" y1="280.8" x2="248" y2="348.5" stroke="#f4f4f4" stroke-width="2" />
<line x1="241.5" y1="289.5" x2="254.5" y2="289.5" stroke="#f4f4f4" stroke-width="1" />
<line x1="241.5" y1="341.5" x2="254.5" y2="341.5" stroke="#f4f4f4" stroke-width="1" />
<rect x="242.8" y="282.1" width="12.4" height="17" rx="4" fill="#0c1230" opacity="0.32"/>
<rect x="241.9" y="281" width="12.2" height="16.6" fill="url(#hg)" rx="4" stroke="#18224e" stroke-width="1.15"/>
<rect x="244.1" y="283.4" width="7.8" height="11.8" fill="none" rx="2.6" stroke="#8797d8" stroke-width="0.9" opacity="0.7"/>
<line x1="243.6" y1="289.3" x2="252.4" y2="289.3" stroke="#3c4c92" stroke-width="1.1" />
<text transform="translate(247.5 361) scale(0.95 1)" font-size="9.8" fill="#e6e6ea" text-anchor="middle" stroke="#e6e6ea" stroke-width="0.15">N</text>
<polygon points="266,289.5 272.8,289.5 266,315.5" fill="#a0a2ab" opacity="0.85"/>
<polygon points="266,315.5 259.2,341.5 266,341.5" fill="#a0a2ab" opacity="0.85"/>
<line x1="266" y1="280.8" x2="266" y2="348.5" stroke="#f4f4f4" stroke-width="2" />
<line x1="259.5" y1="289.5" x2="272.5" y2="289.5" stroke="#f4f4f4" stroke-width="1" />
<line x1="259.5" y1="341.5" x2="272.5" y2="341.5" stroke="#f4f4f4" stroke-width="1" />
<rect x="260.8" y="307.5" width="12.4" height="17" rx="4" fill="#0c1230" opacity="0.32"/>
<rect x="259.9" y="306.4" width="12.2" height="16.6" fill="url(#hg)" rx="4" stroke="#18224e" stroke-width="1.15"/>
<rect x="262.1" y="308.8" width="7.8" height="11.8" fill="none" rx="2.6" stroke="#8797d8" stroke-width="0.9" opacity="0.7"/>
<line x1="261.6" y1="314.7" x2="270.4" y2="314.7" stroke="#3c4c92" stroke-width="1.1" />
<text transform="translate(266 361) scale(0.95 1)" font-size="9.8" fill="#e6e6ea" text-anchor="middle" stroke="#e6e6ea" stroke-width="0.15">Gain</text>
<rect x="147" y="363.2" width="50.7" height="6" fill="#b7b8c0"/>
<text x="172.2" y="368.3" font-size="5.2" fill="#5a5b63" text-anchor="middle" font-weight="bold" class="px">OSC</text>
<rect x="203.3" y="363.2" width="31.7" height="6" fill="#b7b8c0"/>
<text x="219.2" y="368.3" font-size="5.2" fill="#5a5b63" text-anchor="middle" font-weight="bold" class="px">RING</text>
<rect x="281.5" y="246" width="138" height="125" fill="url(#darkp)" rx="6" stroke="#4a4c57" stroke-width="1"/>
<rect x="289.5" y="258" width="38.5" height="7.8" fill="#dededf"/>
<text x="308.7" y="265.2" font-size="8.2" fill="#222" text-anchor="middle">C 3</text>
<text transform="translate(289.3 276) scale(0.9 1)" font-size="9.8" fill="#dcdde2" font-weight="bold">Keytrack</text>
<rect x="358" y="265" width="57.5" height="101" fill="#50535f" rx="4"/>
<text transform="translate(360.8 275.2) scale(0.9 1)" font-size="9.6" fill="#c6c7cf" font-weight="bold">Waveshaper</text>
<polygon points="299,289.5 305.8,289.5 299,315.5" fill="#a0a2ab" opacity="0.85"/>
<polygon points="299,315.5 292.2,341.5 299,341.5" fill="#a0a2ab" opacity="0.85"/>
<line x1="299" y1="280.8" x2="299" y2="348.5" stroke="#f4f4f4" stroke-width="2" />
<line x1="292.5" y1="289.5" x2="305.5" y2="289.5" stroke="#f4f4f4" stroke-width="1" />
<line x1="292.5" y1="341.5" x2="305.5" y2="341.5" stroke="#f4f4f4" stroke-width="1" />
<rect x="293.8" y="301.2" width="12.4" height="17" rx="4" fill="#0c1230" opacity="0.32"/>
<rect x="292.9" y="300.1" width="12.2" height="16.6" fill="url(#hg)" rx="4" stroke="#18224e" stroke-width="1.15"/>
<rect x="295.1" y="302.5" width="7.8" height="11.8" fill="none" rx="2.6" stroke="#8797d8" stroke-width="0.9" opacity="0.7"/>
<line x1="294.6" y1="308.4" x2="303.4" y2="308.4" stroke="#3c4c92" stroke-width="1.1" />
<polygon points="318,289.5 324.8,289.5 318,315.5" fill="#a0a2ab" opacity="0.85"/>
<polygon points="318,315.5 311.2,341.5 318,341.5" fill="#a0a2ab" opacity="0.85"/>
<line x1="318" y1="280.8" x2="318" y2="348.5" stroke="#f4f4f4" stroke-width="2" />
<line x1="311.5" y1="289.5" x2="324.5" y2="289.5" stroke="#f4f4f4" stroke-width="1" />
<line x1="311.5" y1="341.5" x2="324.5" y2="341.5" stroke="#f4f4f4" stroke-width="1" />
<rect x="312.8" y="308.1" width="12.4" height="17" rx="4" fill="#0c1230" opacity="0.32"/>
<rect x="311.9" y="307" width="12.2" height="16.6" fill="url(#hg)" rx="4" stroke="#18224e" stroke-width="1.15"/>
<rect x="314.1" y="309.4" width="7.8" height="11.8" fill="none" rx="2.6" stroke="#8797d8" stroke-width="0.9" opacity="0.7"/>
<line x1="313.6" y1="315.3" x2="322.4" y2="315.3" stroke="#3c4c92" stroke-width="1.1" />
<polygon points="341,289.5 347.8,289.5 341,341.5" fill="#a0a2ab" opacity="0.85"/>
<line x1="341" y1="280.8" x2="341" y2="348.5" stroke="#f4f4f4" stroke-width="2" />
<line x1="334.5" y1="289.5" x2="347.5" y2="289.5" stroke="#f4f4f4" stroke-width="1" />
<line x1="334.5" y1="341.5" x2="347.5" y2="341.5" stroke="#f4f4f4" stroke-width="1" />
<rect x="335.8" y="303.4" width="12.4" height="17" rx="4" fill="#0c1230" opacity="0.32"/>
<rect x="334.9" y="302.3" width="12.2" height="16.6" fill="url(#hg)" rx="4" stroke="#18224e" stroke-width="1.15"/>
<rect x="337.1" y="304.7" width="7.8" height="11.8" fill="none" rx="2.6" stroke="#8797d8" stroke-width="0.9" opacity="0.7"/>
<line x1="336.6" y1="310.6" x2="345.4" y2="310.6" stroke="#3c4c92" stroke-width="1.1" />
<polygon points="402,289.5 408.8,289.5 402,315.5" fill="#a0a2ab" opacity="0.85"/>
<polygon points="402,315.5 395.2,341.5 402,341.5" fill="#a0a2ab" opacity="0.85"/>
<line x1="402" y1="280.8" x2="402" y2="348.5" stroke="#f4f4f4" stroke-width="2" />
<line x1="395.5" y1="289.5" x2="408.5" y2="289.5" stroke="#f4f4f4" stroke-width="1" />
<line x1="395.5" y1="341.5" x2="408.5" y2="341.5" stroke="#f4f4f4" stroke-width="1" />
<rect x="396.8" y="305.9" width="12.4" height="17" rx="4" fill="#0c1230" opacity="0.32"/>
<rect x="395.9" y="304.8" width="12.2" height="16.6" fill="url(#hg)" rx="4" stroke="#18224e" stroke-width="1.15"/>
<rect x="398.1" y="307.2" width="7.8" height="11.8" fill="none" rx="2.6" stroke="#8797d8" stroke-width="0.9" opacity="0.7"/>
<line x1="397.6" y1="313.1" x2="406.4" y2="313.1" stroke="#3c4c92" stroke-width="1.1" />
<rect x="363.2" y="293" width="27" height="6.3" fill="#f59a3c"/>
<text x="376.7" y="298.6" font-size="5.5" fill="#fff" text-anchor="middle" font-weight="bold" class="px">OFF</text>
<rect x="363.2" y="300.55" width="27" height="6.3" fill="#a8652a"/>
<text x="376.7" y="306.15" font-size="5.5" fill="#fbe8d0" text-anchor="middle" font-weight="bold" class="px">SOFT</text>
<rect x="363.2" y="308.1" width="27" height="6.3" fill="#a8652a"/>
<text x="376.7" y="313.7" font-size="5.5" fill="#fbe8d0" text-anchor="middle" font-weight="bold" class="px">HARD</text>
<rect x="363.2" y="315.65" width="27" height="6.3" fill="#a8652a"/>
<text x="376.7" y="321.25" font-size="5.5" fill="#fbe8d0" text-anchor="middle" font-weight="bold" class="px">ASSYM</text>
<rect x="363.2" y="323.2" width="27" height="6.3" fill="#a8652a"/>
<text x="376.7" y="328.8" font-size="5.5" fill="#fbe8d0" text-anchor="middle" font-weight="bold" class="px">SINE</text>
<rect x="363.2" y="330.75" width="27" height="6.3" fill="#a8652a"/>
<text x="376.7" y="336.35" font-size="5.5" fill="#fbe8d0" text-anchor="middle" font-weight="bold" class="px">DIGI</text>
<rect x="396" y="352.2" width="11" height="11" fill="#3a2a1a" stroke="#f0923a" stroke-width="1.2"/>
<path d="M398 360.5 H400.5 Q401.5 360.5 401.5 357.8 Q401.5 355 402.5 355 H405" fill="none" stroke="#fff" stroke-width="1.1"/>
<polygon points="289.5,354 289.5,360 292.7,357" fill="#dcdde3" />
<text transform="translate(293.5 361) scale(0.95 1)" font-size="9.8" fill="#e6e6ea" stroke="#e6e6ea" stroke-width="0.15">F1</text>
<polygon points="308.3,354 308.3,360 311.5,357" fill="#dcdde3" />
<text transform="translate(312.3 361) scale(0.95 1)" font-size="9.8" fill="#e6e6ea" stroke="#e6e6ea" stroke-width="0.15">F2</text>
<text transform="translate(340.5 361) scale(0.95 1)" font-size="9.8" fill="#e6e6ea" text-anchor="middle" stroke="#e6e6ea" stroke-width="0.15">HP</text>
<rect x="422.5" y="246" width="137" height="125" fill="url(#darkp)" rx="6" stroke="#4a4c57" stroke-width="1"/>
<rect x="430.4" y="252.1" width="74.7" height="14.3" fill="#60626e"/>
<rect x="436.5" y="252.1" width="4.8" height="14.3" fill="#a67a42"/>
<rect x="455.7" y="252.1" width="4.8" height="14.3" fill="#a67a42"/>
<rect x="493.3" y="252.1" width="4.8" height="14.3" fill="#a67a42"/>
<path d="M430.4 266.4 L448.8 252.9 Q456.4 258.6 466.4 259.5 H488 Q496.4 261 504.8 266.4 Z" fill="#dcdcdf" opacity="0.86"/>
<rect x="466.4" y="259.5" width="21.6" height="6.9" fill="#a4a6b2" opacity="0.8"/>
<rect x="518.5" y="253" width="29.5" height="12.8" fill="#0d3b80" stroke="#1a58bc" stroke-width="1.3"/>
<text transform="translate(533.25 262.8) scale(0.95 1)" font-size="9.4" fill="#2c66c4" text-anchor="middle">Route</text>
<text transform="translate(491 276.3) scale(0.93 1)" font-size="10" fill="#e2e3e8" text-anchor="middle" font-weight="bold">Filter EG</text>
<line x1="432.7" y1="273.3" x2="468.7" y2="273.3" stroke="#cfd0d6" stroke-width="1" />
<line x1="514" y1="273.3" x2="548.6" y2="273.3" stroke="#cfd0d6" stroke-width="1" />
<polygon points="439,289.5 445.8,289.5 439,341.5" fill="#a0a2ab" opacity="0.85"/>
<line x1="439" y1="280.8" x2="439" y2="348.5" stroke="#f4f4f4" stroke-width="2" />
<line x1="432.5" y1="289.5" x2="445.5" y2="289.5" stroke="#f4f4f4" stroke-width="1" />
<line x1="432.5" y1="341.5" x2="445.5" y2="341.5" stroke="#f4f4f4" stroke-width="1" />
<rect x="433.8" y="324.8" width="12.4" height="17" rx="4" fill="#0c1230" opacity="0.32"/>
<rect x="432.9" y="323.7" width="12.2" height="16.6" fill="url(#hg)" rx="4" stroke="#18224e" stroke-width="1.15"/>
<rect x="435.1" y="326.1" width="7.8" height="11.8" fill="none" rx="2.6" stroke="#8797d8" stroke-width="0.9" opacity="0.7"/>
<line x1="434.6" y1="332" x2="443.4" y2="332" stroke="#3c4c92" stroke-width="1.1" />
<polygon points="458,289.5 464.8,289.5 458,341.5" fill="#a0a2ab" opacity="0.85"/>
<line x1="458" y1="280.8" x2="458" y2="348.5" stroke="#f4f4f4" stroke-width="2" />
<line x1="451.5" y1="289.5" x2="464.5" y2="289.5" stroke="#f4f4f4" stroke-width="1" />
<line x1="451.5" y1="341.5" x2="464.5" y2="341.5" stroke="#f4f4f4" stroke-width="1" />
<rect x="452.8" y="292.8" width="12.4" height="17" rx="4" fill="#0c1230" opacity="0.32"/>
<rect x="451.9" y="291.7" width="12.2" height="16.6" fill="url(#hg)" rx="4" stroke="#18224e" stroke-width="1.15"/>
<rect x="454.1" y="294.1" width="7.8" height="11.8" fill="none" rx="2.6" stroke="#8797d8" stroke-width="0.9" opacity="0.7"/>
<line x1="453.6" y1="300" x2="462.4" y2="300" stroke="#3c4c92" stroke-width="1.1" />
<polygon points="477,289.5 483.8,289.5 477,341.5" fill="#a0a2ab" opacity="0.85"/>
<line x1="477" y1="280.8" x2="477" y2="348.5" stroke="#f4f4f4" stroke-width="2" />
<line x1="470.5" y1="289.5" x2="483.5" y2="289.5" stroke="#f4f4f4" stroke-width="1" />
<line x1="470.5" y1="341.5" x2="483.5" y2="341.5" stroke="#f4f4f4" stroke-width="1" />
<rect x="471.8" y="334.4" width="12.4" height="17" rx="4" fill="#0c1230" opacity="0.32"/>
<rect x="470.9" y="333.3" width="12.2" height="16.6" fill="url(#hg)" rx="4" stroke="#18224e" stroke-width="1.15"/>
<rect x="473.1" y="335.7" width="7.8" height="11.8" fill="none" rx="2.6" stroke="#8797d8" stroke-width="0.9" opacity="0.7"/>
<line x1="472.6" y1="341.6" x2="481.4" y2="341.6" stroke="#3c4c92" stroke-width="1.1" />
<polygon points="496,289.5 502.8,289.5 496,341.5" fill="#a0a2ab" opacity="0.85"/>
<line x1="496" y1="280.8" x2="496" y2="348.5" stroke="#f4f4f4" stroke-width="2" />
<line x1="489.5" y1="289.5" x2="502.5" y2="289.5" stroke="#f4f4f4" stroke-width="1" />
<line x1="489.5" y1="341.5" x2="502.5" y2="341.5" stroke="#f4f4f4" stroke-width="1" />
<rect x="490.8" y="291.2" width="12.4" height="17" rx="4" fill="#0c1230" opacity="0.32"/>
<rect x="489.9" y="290.1" width="12.2" height="16.6" fill="url(#hg)" rx="4" stroke="#18224e" stroke-width="1.15"/>
<rect x="492.1" y="292.5" width="7.8" height="11.8" fill="none" rx="2.6" stroke="#8797d8" stroke-width="0.9" opacity="0.7"/>
<line x1="491.6" y1="298.4" x2="500.4" y2="298.4" stroke="#3c4c92" stroke-width="1.1" />
<polygon points="524,289.5 530.8,289.5 524,315.5" fill="#a0a2ab" opacity="0.85"/>
<polygon points="524,315.5 517.2,341.5 524,341.5" fill="#a0a2ab" opacity="0.85"/>
<line x1="524" y1="280.8" x2="524" y2="348.5" stroke="#f4f4f4" stroke-width="2" />
<line x1="517.5" y1="289.5" x2="530.5" y2="289.5" stroke="#f4f4f4" stroke-width="1" />
<line x1="517.5" y1="341.5" x2="530.5" y2="341.5" stroke="#f4f4f4" stroke-width="1" />
<rect x="518.8" y="301.2" width="12.4" height="17" rx="4" fill="#0c1230" opacity="0.32"/>
<rect x="517.9" y="300.1" width="12.2" height="16.6" fill="url(#hg)" rx="4" stroke="#18224e" stroke-width="1.15"/>
<rect x="520.1" y="302.5" width="7.8" height="11.8" fill="none" rx="2.6" stroke="#8797d8" stroke-width="0.9" opacity="0.7"/>
<line x1="519.6" y1="308.4" x2="528.4" y2="308.4" stroke="#3c4c92" stroke-width="1.1" />
<polygon points="543,289.5 549.8,289.5 543,315.5" fill="#a0a2ab" opacity="0.85"/>
<polygon points="543,315.5 536.2,341.5 543,341.5" fill="#a0a2ab" opacity="0.85"/>
<line x1="543" y1="280.8" x2="543" y2="348.5" stroke="#f4f4f4" stroke-width="2" />
<line x1="536.5" y1="289.5" x2="549.5" y2="289.5" stroke="#f4f4f4" stroke-width="1" />
<line x1="536.5" y1="341.5" x2="549.5" y2="341.5" stroke="#f4f4f4" stroke-width="1" />
<rect x="537.8" y="308.1" width="12.4" height="17" rx="4" fill="#0c1230" opacity="0.32"/>
<rect x="536.9" y="307" width="12.2" height="16.6" fill="url(#hg)" rx="4" stroke="#18224e" stroke-width="1.15"/>
<rect x="539.1" y="309.4" width="7.8" height="11.8" fill="none" rx="2.6" stroke="#8797d8" stroke-width="0.9" opacity="0.7"/>
<line x1="538.6" y1="315.3" x2="547.4" y2="315.3" stroke="#3c4c92" stroke-width="1.1" />
<text transform="translate(439.3 361) scale(0.95 1)" font-size="9.8" fill="#e6e6ea" text-anchor="middle" stroke="#e6e6ea" stroke-width="0.15">A</text>
<text transform="translate(458 361) scale(0.95 1)" font-size="9.8" fill="#e6e6ea" text-anchor="middle" stroke="#e6e6ea" stroke-width="0.15">D</text>
<text transform="translate(477 361) scale(0.95 1)" font-size="9.8" fill="#e6e6ea" text-anchor="middle" stroke="#e6e6ea" stroke-width="0.15">S</text>
<text transform="translate(495.6 361) scale(0.95 1)" font-size="9.8" fill="#e6e6ea" text-anchor="middle" stroke="#e6e6ea" stroke-width="0.15">R</text>
<polygon points="514.3,354 514.3,360 517.5,357" fill="#dcdde3" />
<text transform="translate(518.3 361) scale(0.95 1)" font-size="9.8" fill="#e6e6ea" stroke="#e6e6ea" stroke-width="0.15">F1</text>
<polygon points="533,354 533,360 536.2,357" fill="#dcdde3" />
<text transform="translate(537 361) scale(0.95 1)" font-size="9.8" fill="#e6e6ea" stroke="#e6e6ea" stroke-width="0.15">F2</text>
<rect x="562" y="246" width="139" height="125" fill="url(#darkp)" rx="6" stroke="#4a4c57" stroke-width="1"/>
<rect x="571" y="252.1" width="74" height="14.3" fill="#60626e"/>
<rect x="577.1" y="252.1" width="4.8" height="14.3" fill="#a67a42"/>
<rect x="596.3" y="252.1" width="4.8" height="14.3" fill="#a67a42"/>
<rect x="633.9" y="252.1" width="4.8" height="14.3" fill="#a67a42"/>
<path d="M571 266.4 L589.4 252.9 Q597 258.6 607 259.5 H628.6 Q637 261 645.4 266.4 Z" fill="#dcdcdf" opacity="0.86"/>
<rect x="607" y="259.5" width="21.6" height="6.9" fill="#a4a6b2" opacity="0.8"/>
<rect x="657.6" y="253" width="31.3" height="12.8" fill="#0d3b80" stroke="#1a58bc" stroke-width="1.3"/>
<text transform="translate(673.25 262.8) scale(0.95 1)" font-size="9.4" fill="#2c66c4" text-anchor="middle">Route</text>
<text transform="translate(609.8 276.3) scale(0.93 1)" font-size="10" fill="#e2e3e8" text-anchor="middle" font-weight="bold">Amp EG</text>
<line x1="573" y1="273.3" x2="589" y2="273.3" stroke="#cfd0d6" stroke-width="1" />
<line x1="631" y1="273.3" x2="642.8" y2="273.3" stroke="#cfd0d6" stroke-width="1" />
<text transform="translate(673.5 276.3) scale(0.93 1)" font-size="10" fill="#e2e3e8" text-anchor="middle" font-weight="bold">Amp</text>
<line x1="657.3" y1="273.3" x2="662.3" y2="273.3" stroke="#cfd0d6" stroke-width="1" />
<line x1="684.8" y1="273.3" x2="689.8" y2="273.3" stroke="#cfd0d6" stroke-width="1" />
<polygon points="580,289.5 586.8,289.5 580,341.5" fill="#a0a2ab" opacity="0.85"/>
<line x1="580" y1="280.8" x2="580" y2="348.5" stroke="#f4f4f4" stroke-width="2" />
<line x1="573.5" y1="289.5" x2="586.5" y2="289.5" stroke="#f4f4f4" stroke-width="1" />
<line x1="573.5" y1="341.5" x2="586.5" y2="341.5" stroke="#f4f4f4" stroke-width="1" />
<rect x="574.8" y="300.8" width="12.4" height="17" rx="4" fill="#0c1230" opacity="0.32"/>
<rect x="573.9" y="299.7" width="12.2" height="16.6" fill="url(#hg)" rx="4" stroke="#18224e" stroke-width="1.15"/>
<rect x="576.1" y="302.1" width="7.8" height="11.8" fill="none" rx="2.6" stroke="#8797d8" stroke-width="0.9" opacity="0.7"/>
<line x1="575.6" y1="308" x2="584.4" y2="308" stroke="#3c4c92" stroke-width="1.1" />
<polygon points="599,289.5 605.8,289.5 599,341.5" fill="#a0a2ab" opacity="0.85"/>
<line x1="599" y1="280.8" x2="599" y2="348.5" stroke="#f4f4f4" stroke-width="2" />
<line x1="592.5" y1="289.5" x2="605.5" y2="289.5" stroke="#f4f4f4" stroke-width="1" />
<line x1="592.5" y1="341.5" x2="605.5" y2="341.5" stroke="#f4f4f4" stroke-width="1" />
<rect x="593.8" y="309.8" width="12.4" height="17" rx="4" fill="#0c1230" opacity="0.32"/>
<rect x="592.9" y="308.7" width="12.2" height="16.6" fill="url(#hg)" rx="4" stroke="#18224e" stroke-width="1.15"/>
<rect x="595.1" y="311.1" width="7.8" height="11.8" fill="none" rx="2.6" stroke="#8797d8" stroke-width="0.9" opacity="0.7"/>
<line x1="594.6" y1="317" x2="603.4" y2="317" stroke="#3c4c92" stroke-width="1.1" />
<polygon points="617,289.5 623.8,289.5 617,341.5" fill="#a0a2ab" opacity="0.85"/>
<line x1="617" y1="280.8" x2="617" y2="348.5" stroke="#f4f4f4" stroke-width="2" />
<line x1="610.5" y1="289.5" x2="623.5" y2="289.5" stroke="#f4f4f4" stroke-width="1" />
<line x1="610.5" y1="341.5" x2="623.5" y2="341.5" stroke="#f4f4f4" stroke-width="1" />
<rect x="611.8" y="281.6" width="12.4" height="17" rx="4" fill="#0c1230" opacity="0.32"/>
<rect x="610.9" y="280.5" width="12.2" height="16.6" fill="url(#hg)" rx="4" stroke="#18224e" stroke-width="1.15"/>
<rect x="613.1" y="282.9" width="7.8" height="11.8" fill="none" rx="2.6" stroke="#8797d8" stroke-width="0.9" opacity="0.7"/>
<line x1="612.6" y1="288.8" x2="621.4" y2="288.8" stroke="#3c4c92" stroke-width="1.1" />
<polygon points="636,289.5 642.8,289.5 636,341.5" fill="#a0a2ab" opacity="0.85"/>
<line x1="636" y1="280.8" x2="636" y2="348.5" stroke="#f4f4f4" stroke-width="2" />
<line x1="629.5" y1="289.5" x2="642.5" y2="289.5" stroke="#f4f4f4" stroke-width="1" />
<line x1="629.5" y1="341.5" x2="642.5" y2="341.5" stroke="#f4f4f4" stroke-width="1" />
<rect x="630.8" y="295.8" width="12.4" height="17" rx="4" fill="#0c1230" opacity="0.32"/>
<rect x="629.9" y="294.7" width="12.2" height="16.6" fill="url(#hg)" rx="4" stroke="#18224e" stroke-width="1.15"/>
<rect x="632.1" y="297.1" width="7.8" height="11.8" fill="none" rx="2.6" stroke="#8797d8" stroke-width="0.9" opacity="0.7"/>
<line x1="631.6" y1="303" x2="640.4" y2="303" stroke="#3c4c92" stroke-width="1.1" />
<polygon points="664,289.5 670.8,289.5 664,315.5" fill="#a0a2ab" opacity="0.85"/>
<polygon points="664,315.5 657.2,341.5 664,341.5" fill="#a0a2ab" opacity="0.85"/>
<line x1="664" y1="280.8" x2="664" y2="348.5" stroke="#f4f4f4" stroke-width="2" />
<line x1="657.5" y1="289.5" x2="670.5" y2="289.5" stroke="#f4f4f4" stroke-width="1" />
<line x1="657.5" y1="341.5" x2="670.5" y2="341.5" stroke="#f4f4f4" stroke-width="1" />
<rect x="658.8" y="303.2" width="12.4" height="17" rx="4" fill="#0c1230" opacity="0.32"/>
<rect x="657.9" y="302.1" width="12.2" height="16.6" fill="url(#hg)" rx="4" stroke="#18224e" stroke-width="1.15"/>
<rect x="660.1" y="304.5" width="7.8" height="11.8" fill="none" rx="2.6" stroke="#8797d8" stroke-width="0.9" opacity="0.7"/>
<line x1="659.6" y1="310.4" x2="668.4" y2="310.4" stroke="#3c4c92" stroke-width="1.1" />
<polygon points="683,289.5 689.8,289.5 683,341.5" fill="#a0a2ab" opacity="0.85"/>
<line x1="683" y1="280.8" x2="683" y2="348.5" stroke="#f4f4f4" stroke-width="2" />
<line x1="676.5" y1="289.5" x2="689.5" y2="289.5" stroke="#f4f4f4" stroke-width="1" />
<line x1="676.5" y1="341.5" x2="689.5" y2="341.5" stroke="#f4f4f4" stroke-width="1" />
<rect x="677.8" y="281.6" width="12.4" height="17" rx="4" fill="#101010" opacity="0.3"/>
<rect x="676.9" y="280.5" width="12.2" height="16.6" fill="url(#hgg)" rx="4" stroke="#4b4b46" stroke-width="1.15"/>
<rect x="679.1" y="282.9" width="7.8" height="11.8" fill="none" rx="2.6" stroke="#a4a4a0" stroke-width="0.9" opacity="0.7"/>
<line x1="678.6" y1="288.8" x2="687.4" y2="288.8" stroke="#5a5a58" stroke-width="1.1" />
<text transform="translate(579.8 361) scale(0.95 1)" font-size="9.8" fill="#e6e6ea" text-anchor="middle" stroke="#e6e6ea" stroke-width="0.15">A</text>
<text transform="translate(598.5 361) scale(0.95 1)" font-size="9.8" fill="#e6e6ea" text-anchor="middle" stroke="#e6e6ea" stroke-width="0.15">D</text>
<text transform="translate(617.3 361) scale(0.95 1)" font-size="9.8" fill="#e6e6ea" text-anchor="middle" stroke="#e6e6ea" stroke-width="0.15">S</text>
<text transform="translate(636 361) scale(0.95 1)" font-size="9.8" fill="#e6e6ea" text-anchor="middle" stroke="#e6e6ea" stroke-width="0.15">R</text>
<text transform="translate(663 361) scale(0.95 1)" font-size="9.8" fill="#e6e6ea" text-anchor="middle" stroke="#e6e6ea" stroke-width="0.15">Gain</text>
<text transform="translate(683 361) scale(0.95 1)" font-size="9.8" fill="#e6e6ea" text-anchor="middle" stroke="#e6e6ea" stroke-width="0.15">Vel</text>
<rect x="0" y="372.3" width="702.5" height="48.5" fill="#1b50ae"/>
<line x1="0" y1="373.2" x2="702.5" y2="373.2" stroke="#2f7be8" stroke-width="1.6" />
<line x1="0" y1="420" x2="702.5" y2="420" stroke="#0a0c14" stroke-width="1.6" />
<rect x="0.5" y="375.5" width="68" height="12" fill="#163a7c" stroke="#5c9cf4" stroke-width="1"/>
<text transform="translate(34 385.1) scale(0.97 1)" font-size="9.5" fill="#6aa2f2" text-anchor="middle">Velocity</text>
<rect x="0.5" y="390.5" width="68" height="12" fill="#163a7c" stroke="#2f76dc" stroke-width="1"/>
<text transform="translate(33.5 400.1) scale(0.97 1)" font-size="9.5" fill="#8ab6f7" text-anchor="middle">LFO 1</text>
<path d="M62.1 393.1 H64.7 V396.7 H66.4 L63.4 400.5 L60.4 396.7 H62.1 Z" fill="#5a3a10" stroke="#f0a030" stroke-width="1"/>
<rect x="0.5" y="405.3" width="68" height="12" fill="#163a7c" stroke="#2f76dc" stroke-width="1"/>
<text transform="translate(33.5 414.9) scale(0.97 1)" font-size="9.5" fill="#2a5cae" text-anchor="middle">SLFO 1</text>
<path d="M63.7 409.5 V414.3 M61.8 412.5 L63.7 414.6 L65.6 412.5" fill="none" stroke="#7fb0f6" stroke-width="1.1"/>
<rect x="70.96" y="375.5" width="68.3" height="12" fill="#163a7c" stroke="#2f76dc" stroke-width="1"/>
<text transform="translate(104.61 385.1) scale(0.97 1)" font-size="9.5" fill="#2a5cae" text-anchor="middle">Keytrack</text>
<rect x="70.96" y="390.5" width="68.3" height="12" fill="#163a7c" stroke="#2f76dc" stroke-width="1"/>
<text transform="translate(104.11 400.1) scale(0.97 1)" font-size="9.5" fill="#8ab6f7" text-anchor="middle">LFO 2</text>
<path d="M134.46 394.7 V399.5 M132.56 397.7 L134.46 399.8 L136.36 397.7" fill="none" stroke="#7fb0f6" stroke-width="1.1"/>
<rect x="70.96" y="405.3" width="68.3" height="12" fill="#163a7c" stroke="#2f76dc" stroke-width="1"/>
<text transform="translate(104.11 414.9) scale(0.97 1)" font-size="9.5" fill="#2a5cae" text-anchor="middle">SLFO 2</text>
<path d="M134.46 409.5 V414.3 M132.56 412.5 L134.46 414.6 L136.36 412.5" fill="none" stroke="#7fb0f6" stroke-width="1.1"/>
<rect x="141.12" y="375.5" width="68.3" height="12" fill="#163a7c" stroke="#2f76dc" stroke-width="1"/>
<text transform="translate(174.77 385.1) scale(0.97 1)" font-size="9.5" fill="#2a5cae" text-anchor="middle">Poly AT</text>
<rect x="141.12" y="390.5" width="68.3" height="12" fill="#163a7c" stroke="#2f76dc" stroke-width="1"/>
<text transform="translate(174.27 400.1) scale(0.97 1)" font-size="9.5" fill="#2a5cae" text-anchor="middle">LFO 3</text>
<path d="M204.62 394.7 V399.5 M202.72 397.7 L204.62 399.8 L206.52 397.7" fill="none" stroke="#7fb0f6" stroke-width="1.1"/>
<rect x="141.12" y="405.3" width="68.3" height="12" fill="#163a7c" stroke="#2f76dc" stroke-width="1"/>
<text transform="translate(174.27 414.9) scale(0.97 1)" font-size="9.5" fill="#2a5cae" text-anchor="middle">SLFO 3</text>
<path d="M204.62 409.5 V414.3 M202.72 412.5 L204.62 414.6 L206.52 412.5" fill="none" stroke="#7fb0f6" stroke-width="1.1"/>
<rect x="211.28" y="375.5" width="68.3" height="12" fill="#163a7c" stroke="#2f76dc" stroke-width="1"/>
<text transform="translate(244.93 385.1) scale(0.97 1)" font-size="9.5" fill="#2a5cae" text-anchor="middle">Chan. AT</text>
<rect x="211.28" y="390.5" width="68.3" height="12" fill="#163a7c" stroke="#2f76dc" stroke-width="1"/>
<text transform="translate(244.43 400.1) scale(0.97 1)" font-size="9.5" fill="#2a5cae" text-anchor="middle">LFO 4</text>
<path d="M274.78 394.7 V399.5 M272.88 397.7 L274.78 399.8 L276.68 397.7" fill="none" stroke="#7fb0f6" stroke-width="1.1"/>
<rect x="211.28" y="405.3" width="68.3" height="12" fill="#163a7c" stroke="#2f76dc" stroke-width="1"/>
<text transform="translate(244.43 414.9) scale(0.97 1)" font-size="9.5" fill="#2a5cae" text-anchor="middle">SLFO 4</text>
<path d="M274.78 409.5 V414.3 M272.88 412.5 L274.78 414.6 L276.68 412.5" fill="none" stroke="#7fb0f6" stroke-width="1.1"/>
<rect x="281.44" y="375.5" width="68.3" height="12" fill="#163a7c" stroke="#2f76dc" stroke-width="1"/>
<text transform="translate(315.09 385.1) scale(0.97 1)" font-size="9.5" fill="#2a5cae" text-anchor="middle">Pitchbend</text>
<rect x="281.44" y="390.5" width="68.3" height="12" fill="#163a7c" stroke="#2f76dc" stroke-width="1"/>
<text transform="translate(314.59 400.1) scale(0.97 1)" font-size="9.5" fill="#2a5cae" text-anchor="middle">LFO 5</text>
<path d="M344.94 394.7 V399.5 M343.04 397.7 L344.94 399.8 L346.84 397.7" fill="none" stroke="#7fb0f6" stroke-width="1.1"/>
<rect x="281.44" y="405.3" width="68.3" height="12" fill="#163a7c" stroke="#2f76dc" stroke-width="1"/>
<text transform="translate(314.59 414.9) scale(0.97 1)" font-size="9.5" fill="#2a5cae" text-anchor="middle">SLFO 5</text>
<path d="M344.94 409.5 V414.3 M343.04 412.5 L344.94 414.6 L346.84 412.5" fill="none" stroke="#7fb0f6" stroke-width="1.1"/>
<rect x="351.6" y="375.5" width="68.3" height="12" fill="#163a7c" stroke="#2f76dc" stroke-width="1"/>
<text transform="translate(385.25 385.1) scale(0.97 1)" font-size="9.5" fill="#2a5cae" text-anchor="middle">Modwheel</text>
<rect x="351.6" y="390.5" width="68.3" height="12" fill="#163a7c" stroke="#2f76dc" stroke-width="1"/>
<text transform="translate(384.75 400.1) scale(0.97 1)" font-size="9.5" fill="#2a5cae" text-anchor="middle">LFO 6</text>
<path d="M415.1 394.7 V399.5 M413.2 397.7 L415.1 399.8 L417 397.7" fill="none" stroke="#7fb0f6" stroke-width="1.1"/>
<rect x="351.6" y="405.3" width="68.3" height="12" fill="#163a7c" stroke="#2f76dc" stroke-width="1"/>
<text transform="translate(384.75 414.9) scale(0.97 1)" font-size="9.5" fill="#2a5cae" text-anchor="middle">SLFO 6</text>
<path d="M415.1 409.5 V414.3 M413.2 412.5 L415.1 414.6 L417 412.5" fill="none" stroke="#7fb0f6" stroke-width="1.1"/>
<rect x="421.76" y="375.2" width="68.3" height="20.6" fill="#b4ef5e" stroke="#d2ff8a" stroke-width="1"/>
<text x="455.91" y="384.6" font-size="9.3" fill="#1a3a10" text-anchor="middle">Cutoff</text>
<rect x="423.46" y="387.8" width="64.9" height="6.3" fill="#2263c6"/>
<rect x="454.8" y="387.8" width="11.7" height="6.3" fill="#4d97f5"/>
<rect x="491.92" y="375.2" width="68.3" height="20.6" fill="#163a7c" stroke="#2f76dc" stroke-width="1"/>
<text x="526.07" y="384.6" font-size="9.3" fill="#86b4f6" text-anchor="middle">Uni Spread</text>
<rect x="493.62" y="387.8" width="64.9" height="6.3" fill="#2263c6"/>
<rect x="494" y="387.8" width="22" height="6.3" fill="#4d97f5"/>
<rect x="562.08" y="375.2" width="68.3" height="20.6" fill="#163a7c" stroke="#2f76dc" stroke-width="1"/>
<text x="596.23" y="384.6" font-size="9.3" fill="#4a8ae4" text-anchor="middle">Speed</text>
<rect x="563.78" y="387.8" width="64.9" height="6.3" fill="#2263c6"/>
<rect x="632.24" y="375.2" width="68.3" height="20.6" fill="#163a7c" stroke="#2f76dc" stroke-width="1"/>
<text x="666.39" y="384.6" font-size="9.3" fill="#4a8ae4" text-anchor="middle">Formant</text>
<rect x="633.94" y="387.8" width="64.9" height="6.3" fill="#2263c6"/>
<line x1="667" y1="388.3" x2="667" y2="393.8" stroke="#5c9cf2" stroke-width="1" />
<rect x="421.76" y="397.6" width="68.3" height="20" fill="#163a7c" stroke="#2f76dc" stroke-width="1"/>
<text x="455.91" y="407" font-size="9.3" fill="#5c9cf2" text-anchor="middle">Shape</text>
<rect x="423.46" y="409.6" width="64.9" height="6.3" fill="#2263c6"/>
<rect x="491.92" y="397.6" width="68.3" height="20" fill="#163a7c" stroke="#2f76dc" stroke-width="1"/>
<text x="526.07" y="407" font-size="9.3" fill="#2f68c0" text-anchor="middle">-</text>
<rect x="493.62" y="409.6" width="64.9" height="6.3" fill="#2263c6"/>
<rect x="562.08" y="397.6" width="68.3" height="20" fill="#163a7c" stroke="#2f76dc" stroke-width="1"/>
<text x="596.23" y="407" font-size="9.3" fill="#2f68c0" text-anchor="middle">-</text>
<rect x="563.78" y="409.6" width="64.9" height="6.3" fill="#2263c6"/>
<rect x="632.24" y="397.6" width="68.3" height="20" fill="#163a7c" stroke="#2f76dc" stroke-width="1"/>
<text x="666.39" y="407" font-size="9.3" fill="#2f68c0" text-anchor="middle">-</text>
<rect x="633.94" y="409.6" width="64.9" height="6.3" fill="#2263c6"/>
<rect x="0" y="420.6" width="702.5" height="88" fill="#ff920a"/>
<polygon points="17.5,435 122.5,428.2 122.5,435" fill="#9c9c9c" opacity="1"/>
<line x1="12" y1="435" x2="127" y2="435" stroke="#101010" stroke-width="2" />
<line x1="17.5" y1="428.5" x2="17.5" y2="441.5" stroke="#101010" stroke-width="1" />
<line x1="122.5" y1="428.5" x2="122.5" y2="441.5" stroke="#101010" stroke-width="1" />
<text transform="translate(119.5 444.7) scale(0.92 1)" font-size="9.4" fill="#1a1208" text-anchor="end" stroke="#1a1208" stroke-width="0.22">Rate</text>
<rect x="72" y="430.4" width="17" height="12.6" rx="4.2" fill="#0c1230" opacity="0.32"/>
<rect x="71.4" y="429.3" width="16.4" height="12.2" fill="url(#hg)" rx="4" stroke="#18224e" stroke-width="1.15"/>
<rect x="73.8" y="431.5" width="11.6" height="7.8" fill="none" rx="2.6" stroke="#8797d8" stroke-width="0.9" opacity="0.7"/>
<line x1="79.6" y1="431" x2="79.6" y2="439.8" stroke="#3c4c92" stroke-width="1.1" />
<polygon points="17.5,454 122.5,447.2 122.5,454" fill="#9c9c9c" opacity="1"/>
<line x1="16.5" y1="454" x2="127" y2="454" stroke="#101010" stroke-width="2" />
<line x1="17.5" y1="447.5" x2="17.5" y2="460.5" stroke="#101010" stroke-width="1" />
<line x1="122.5" y1="447.5" x2="122.5" y2="460.5" stroke="#101010" stroke-width="1" />
<text transform="translate(119.5 463.7) scale(0.92 1)" font-size="9.4" fill="#1a1208" text-anchor="end" stroke="#1a1208" stroke-width="0.22">Phase / Shuffle</text>
<rect x="9.4" y="449.4" width="17" height="12.6" rx="4.2" fill="#0c1230" opacity="0.32"/>
<rect x="8.8" y="448.3" width="16.4" height="12.2" fill="url(#hg)" rx="4" stroke="#18224e" stroke-width="1.15"/>
<rect x="11.2" y="450.5" width="11.6" height="7.8" fill="none" rx="2.6" stroke="#8797d8" stroke-width="0.9" opacity="0.7"/>
<line x1="17" y1="450" x2="17" y2="458.8" stroke="#3c4c92" stroke-width="1.1" />
<polygon points="17.5,474 122.5,467.2 122.5,474" fill="#9c9c9c" opacity="1"/>
<line x1="12" y1="474" x2="127" y2="474" stroke="#101010" stroke-width="2" />
<line x1="17.5" y1="467.5" x2="17.5" y2="480.5" stroke="#101010" stroke-width="1" />
<line x1="122.5" y1="467.5" x2="122.5" y2="480.5" stroke="#101010" stroke-width="1" />
<text transform="translate(119.5 483.7) scale(0.92 1)" font-size="9.4" fill="#1a1208" text-anchor="end" stroke="#1a1208" stroke-width="0.22">Magnitude</text>
<rect x="115" y="469.4" width="17" height="12.6" rx="4.2" fill="#0c1230" opacity="0.32"/>
<rect x="114.4" y="468.3" width="16.4" height="12.2" fill="url(#hg)" rx="4" stroke="#18224e" stroke-width="1.15"/>
<rect x="116.8" y="470.5" width="11.6" height="7.8" fill="none" rx="2.6" stroke="#8797d8" stroke-width="0.9" opacity="0.7"/>
<line x1="122.6" y1="470" x2="122.6" y2="478.8" stroke="#3c4c92" stroke-width="1.1" />
<polygon points="17.5,494 17.5,500.8 70,494" fill="#9c9c9c" opacity="1"/>
<polygon points="70,494 122.5,487.2 122.5,494" fill="#9c9c9c" opacity="1"/>
<line x1="12" y1="494" x2="127" y2="494" stroke="#101010" stroke-width="2" />
<line x1="17.5" y1="487.5" x2="17.5" y2="500.5" stroke="#101010" stroke-width="1" />
<line x1="122.5" y1="487.5" x2="122.5" y2="500.5" stroke="#101010" stroke-width="1" />
<text transform="translate(119.5 503.7) scale(0.92 1)" font-size="9.4" fill="#1a1208" text-anchor="end" stroke="#1a1208" stroke-width="0.22">Deform</text>
<rect x="62.4" y="489.4" width="17" height="12.6" rx="4.2" fill="#0c1230" opacity="0.32"/>
<rect x="61.8" y="488.3" width="16.4" height="12.2" fill="url(#hg)" rx="4" stroke="#18224e" stroke-width="1.15"/>
<rect x="64.2" y="490.5" width="11.6" height="7.8" fill="none" rx="2.6" stroke="#8797d8" stroke-width="0.9" opacity="0.7"/>
<line x1="70" y1="490" x2="70" y2="498.8" stroke="#3c4c92" stroke-width="1.1" />
<rect x="152" y="430" width="46" height="35" fill="url(#btn)" rx="3.5" stroke="#c9a36c" stroke-width="1"/>
<rect x="153.3" y="442" width="43.4" height="10.4" fill="#ff920a"/>
<line x1="153" y1="441.6" x2="197" y2="441.6" stroke="#cfcfd6" stroke-width="0.8" />
<line x1="153" y1="452.8" x2="197" y2="452.8" stroke="#cfcfd6" stroke-width="0.8" />
<text x="175" y="439.7" font-size="8.8" fill="#222" text-anchor="middle" stroke="#222" stroke-width="0.2">Freerun</text>
<text x="175" y="450.8" font-size="8.8" fill="#2a1a04" text-anchor="middle" stroke="#222" stroke-width="0.2">Keytrigger</text>
<text x="175" y="461.8" font-size="8.8" fill="#222" text-anchor="middle" stroke="#222" stroke-width="0.2">Random</text>
<rect x="152" y="471.3" width="46" height="12.7" fill="url(#btn)" rx="3.5" stroke="#c9a36c" stroke-width="1"/>
<text x="175" y="481" font-size="8.8" fill="#222" text-anchor="middle" stroke="#222" stroke-width="0.2">Bipolar</text>
<rect x="222.5" y="427" width="46.3" height="76.2" fill="url(#btn)" rx="3.5" stroke="#c9a36c" stroke-width="1"/>
<rect x="224" y="428.6" width="43.3" height="8" fill="#ff920a"/>
<text x="245.6" y="435.2" font-size="8.8" fill="#1a1a1a" text-anchor="middle" stroke="#222" stroke-width="0.15">Sine</text>
<line x1="223.5" y1="437.48" x2="267.8" y2="437.48" stroke="#c9c9d2" stroke-width="0.8" />
<text x="245.6" y="444.58" font-size="8.8" fill="#1a1a1a" text-anchor="middle" stroke="#222" stroke-width="0.15">Triangle</text>
<line x1="223.5" y1="446.86" x2="267.8" y2="446.86" stroke="#c9c9d2" stroke-width="0.8" />
<text x="245.6" y="453.96" font-size="8.8" fill="#1a1a1a" text-anchor="middle" stroke="#222" stroke-width="0.15">Square</text>
<line x1="223.5" y1="456.24" x2="267.8" y2="456.24" stroke="#c9c9d2" stroke-width="0.8" />
<text x="245.6" y="463.34" font-size="8.8" fill="#1a1a1a" text-anchor="middle" stroke="#222" stroke-width="0.15">Ramp</text>
<line x1="223.5" y1="465.62" x2="267.8" y2="465.62" stroke="#c9c9d2" stroke-width="0.8" />
<text x="245.6" y="472.72" font-size="8.8" fill="#1a1a1a" text-anchor="middle" stroke="#222" stroke-width="0.15">Noise</text>
<line x1="223.5" y1="475" x2="267.8" y2="475" stroke="#c9c9d2" stroke-width="0.8" />
<text x="245.6" y="482.1" font-size="8.8" fill="#1a1a1a" text-anchor="middle" stroke="#222" stroke-width="0.15">S&amp;H</text>
<line x1="223.5" y1="484.38" x2="267.8" y2="484.38" stroke="#c9c9d2" stroke-width="0.8" />
<text x="245.6" y="491.48" font-size="8.8" fill="#1a1a1a" text-anchor="middle" stroke="#222" stroke-width="0.15">Envelope</text>
<line x1="223.5" y1="493.76" x2="267.8" y2="493.76" stroke="#c9c9d2" stroke-width="0.8" />
<text x="245.6" y="500.86" font-size="8.8" fill="#1a1a1a" text-anchor="middle" stroke="#222" stroke-width="0.15">Stepseq</text>
<line x1="293" y1="433.2" x2="555" y2="433.2" stroke="#f2a848" stroke-width="0.8" />
<line x1="293" y1="496.2" x2="555" y2="496.2" stroke="#f2a848" stroke-width="0.8" />
<line x1="286.5" y1="464.4" x2="555" y2="464.4" stroke="#5a3a10" stroke-width="0.7" />
<line x1="286.5" y1="464.4" x2="555" y2="450.2" stroke="#a86a1c" stroke-width="0.7" />
<line x1="286.5" y1="464.4" x2="555" y2="478.6" stroke="#a86a1c" stroke-width="0.7" />
<path d="M286.5 464.4 L287.25 464.4 L288 464.4 L288.75 464.4 L289.5 464.4 L290.25 464.4 L291 464.4 L291.75 464.4 L292.5 464.4 L293.25 464.4 L294 464.4 L294.75 464.4 L295.5 464.4 L296.25 464.4 L297 464.4 L297.75 464.4 L298.5 464.4 L299.25 464.4 L300 464.4 L300.75 464.4 L301.5 464.4 L302.25 464.41 L303 464.42 L303.75 464.44 L304.5 464.46 L305.25 464.48 L306 464.51 L306.75 464.53 L307.5 464.55 L308.25 464.56 L309 464.56 L309.75 464.54 L310.5 464.5 L311.25 464.44 L312 464.35 L312.75 464.25 L313.5 464.12 L314.25 463.98 L315 463.83 L315.75 463.68 L316.5 463.54 L317.25 463.42 L318 463.32 L318.75 463.26 L319.5 463.25 L320.25 463.29 L321 463.39 L321.75 463.54 L322.5 463.76 L323.25 464.02 L324 464.33 L324.75 464.68 L325.5 465.04 L326.25 465.41 L327 465.76 L327.75 466.08 L328.5 466.35 L329.25 466.56 L330 466.69 L330.75 466.73 L331.5 466.69 L332.25 466.57 L333 466.37 L333.75 466.08 L334.5 465.73 L335.25 465.32 L336 464.86 L336.75 464.37 L337.5 463.86 L338.25 463.36 L339 462.89 L339.75 462.45 L340.5 462.07 L341.25 461.77 L342 461.55 L342.75 461.43 L343.5 461.41 L344.25 461.5 L345 461.7 L345.75 461.99 L346.5 462.38 L347.25 462.86 L348 463.4 L348.75 463.99 L349.5 464.61 L350.25 465.24 L351 465.85 L351.75 466.42 L352.5 466.94 L353.25 467.37 L354 467.71 L354.75 467.94 L355.5 468.05 L356.25 468.03 L357 467.88 L357.75 467.6 L358.5 467.2 L359.25 466.69 L360 466.09 L360.75 465.42 L361.5 464.7 L362.25 463.95 L363 463.2 L363.75 462.48 L364.5 461.82 L365.25 461.23 L366 460.75 L366.75 460.39 L367.5 460.16 L368.25 460.08 L369 460.15 L369.75 460.38 L370.5 460.75 L371.25 461.26 L372 461.89 L372.75 462.62 L373.5 463.43 L374.25 464.28 L375 465.16 L375.75 466.02 L376.5 466.84 L377.25 467.59 L378 468.23 L378.75 468.75 L379.5 469.12 L380.25 469.34 L381 469.38 L381.75 469.24 L382.5 468.93 L383.25 468.45 L384 467.82 L384.75 467.06 L385.5 466.2 L386.25 465.25 L387 464.27 L387.75 463.27 L388.5 462.3 L389.25 461.38 L390 460.57 L390.75 459.87 L391.5 459.33 L392.25 458.96 L393 458.77 L393.75 458.79 L394.5 459 L395.25 459.41 L396 460 L396.75 460.75 L397.5 461.65 L398.25 462.65 L399 463.73 L399.75 464.85 L400.5 465.97 L401.25 467.04 L402 468.04 L402.75 468.92 L403.5 469.65 L404.25 470.21 L405 470.56 L405.75 470.71 L406.5 470.63 L407.25 470.33 L408 469.81 L408.75 469.1 L409.5 468.21 L410.25 467.18 L411 466.03 L411.75 464.81 L412.5 463.57 L413.25 462.34 L414 461.16 L414.75 460.09 L415.5 459.16 L416.25 458.4 L417 457.85 L417.75 457.52 L418.5 457.43 L419.25 457.59 L420 457.99 L420.75 458.62 L421.5 459.46 L422.25 460.49 L423 461.67 L423.75 462.96 L424.5 464.31 L425.25 465.68 L426 467.02 L426.75 468.28 L427.5 469.42 L428.25 470.39 L429 471.16 L429.75 471.7 L430.5 471.99 L431.25 472.01 L432 471.76 L432.75 471.25 L433.5 470.5 L434.25 469.51 L435 468.34 L435.75 467.02 L436.5 465.59 L437.25 464.1 L438 462.61 L438.75 461.17 L439.5 459.83 L440.25 458.63 L441 457.63 L441.75 456.86 L442.5 456.35 L443.25 456.11 L444 456.17 L444.75 456.52 L445.5 457.15 L446.25 458.05 L447 459.17 L447.75 460.5 L448.5 461.97 L449.25 463.54 L450 465.16 L450.75 466.76 L451.5 468.3 L452.25 469.71 L453 470.95 L453.75 471.97 L454.5 472.73 L455.25 473.2 L456 473.36 L456.75 473.21 L457.5 472.75 L458.25 471.99 L459 470.95 L459.75 469.67 L460.5 468.2 L461.25 466.58 L462 464.86 L462.75 463.12 L463.5 461.41 L464.25 459.78 L465 458.31 L465.75 457.04 L466.5 456.02 L467.25 455.29 L468 454.87 L468.75 454.78 L469.5 455.04 L470.25 455.63 L471 456.53 L471.75 457.71 L472.5 459.15 L473.25 460.78 L474 462.55 L474.75 464.4 L475.5 466.27 L476.25 468.08 L477 469.78 L477.75 471.3 L478.5 472.59 L479.25 473.6 L480 474.3 L480.75 474.65 L481.5 474.64 L482.25 474.27 L483 473.55 L483.75 472.5 L484.5 471.15 L485.25 469.56 L486 467.77 L486.75 465.85 L487.5 463.87 L488.25 461.89 L489 459.98 L489.75 458.21 L490.5 456.65 L491.25 455.35 L492 454.37 L492.75 453.72 L493.5 453.45 L494.25 453.57 L495 454.07 L495.75 454.93 L496.5 456.14 L497.25 457.65 L498 459.4 L498.75 461.35 L499.5 463.41 L500.25 465.53 L501 467.62 L501.75 469.61 L502.5 471.43 L503.25 473.02 L504 474.31 L504.75 475.27 L505.5 475.84 L506.25 476.02 L507 475.78 L507.75 475.15 L508.5 474.13 L509.25 472.76 L510 471.08 L510.75 469.16 L511.5 467.06 L512.25 464.85 L513 462.61 L513.75 460.42 L514.5 458.35 L515.25 456.48 L516 454.88 L516.75 453.61 L517.5 452.71 L518.25 452.21 L519 452.14 L519.75 452.51 L520.5 453.29 L521.25 454.48 L522 456.02 L522.75 457.86 L523.5 459.95 L524.25 462.21 L525 464.56 L525.75 466.92 L526.5 469.2 L527.25 471.33 L528 473.23 L528.75 474.83 L529.5 476.07 L530.25 476.91 L531 477.31 L531.75 477.26 L532.5 476.75 L533.25 475.81 L534 474.46 L534.75 472.74 L535.5 470.72 L536.25 468.47 L537 466.05 L537.75 463.57 L538.5 461.1 L539.25 458.73 L540 456.55 L540.75 454.63 L541.5 453.04 L542.25 451.85 L543 451.09 L543.75 450.8 L544.5 450.98 L545.25 451.64 L546 452.75 L546.75 454.28 L547.5 456.18 L548.25 458.37 L549 460.79 L549.75 463.36 L550.5 465.97 L551.25 468.54 L552 470.99 L552.75 473.21 L553.5 475.13 L554.25 476.69 L555 477.83" fill="none" stroke="#0a0a0a" stroke-width="1.5" stroke-linejoin="round" stroke-linecap="round"/>
<text transform="translate(631.9 434) scale(0.96 1)" font-size="9.3" fill="#1a1208" text-anchor="middle" font-weight="bold">LFO EG</text>
<line x1="578" y1="430.7" x2="613.5" y2="430.7" stroke="#1a1208" stroke-width="1" />
<line x1="649.5" y1="430.7" x2="684.8" y2="430.7" stroke="#1a1208" stroke-width="1" />
<polygon points="585,445.5 591.8,445.5 585,482.5" fill="#9c9c9c" opacity="1"/>
<line x1="585" y1="436.7" x2="585" y2="488.7" stroke="#101010" stroke-width="2" />
<line x1="578.5" y1="445.5" x2="591.5" y2="445.5" stroke="#101010" stroke-width="1" />
<line x1="578.5" y1="482.5" x2="591.5" y2="482.5" stroke="#101010" stroke-width="1" />
<rect x="579.8" y="461.8" width="12.4" height="17" rx="4" fill="#0c1230" opacity="0.32"/>
<rect x="578.9" y="460.7" width="12.2" height="16.6" fill="url(#hg)" rx="4" stroke="#18224e" stroke-width="1.15"/>
<rect x="581.1" y="463.1" width="7.8" height="11.8" fill="none" rx="2.6" stroke="#8797d8" stroke-width="0.9" opacity="0.7"/>
<line x1="580.6" y1="469" x2="589.4" y2="469" stroke="#3c4c92" stroke-width="1.1" />
<text transform="translate(584.6 503.8) scale(0.9 1)" font-size="9.6" fill="#1a1208" text-anchor="middle" font-weight="bold">D</text>
<polygon points="604,445.5 610.8,445.5 604,482.5" fill="#9c9c9c" opacity="1"/>
<line x1="604" y1="436.7" x2="604" y2="488.7" stroke="#101010" stroke-width="2" />
<line x1="597.5" y1="445.5" x2="610.5" y2="445.5" stroke="#101010" stroke-width="1" />
<line x1="597.5" y1="482.5" x2="610.5" y2="482.5" stroke="#101010" stroke-width="1" />
<rect x="598.8" y="446.8" width="12.4" height="17" rx="4" fill="#0c1230" opacity="0.32"/>
<rect x="597.9" y="445.7" width="12.2" height="16.6" fill="url(#hg)" rx="4" stroke="#18224e" stroke-width="1.15"/>
<rect x="600.1" y="448.1" width="7.8" height="11.8" fill="none" rx="2.6" stroke="#8797d8" stroke-width="0.9" opacity="0.7"/>
<line x1="599.6" y1="454" x2="608.4" y2="454" stroke="#3c4c92" stroke-width="1.1" />
<text transform="translate(603.5 503.8) scale(0.9 1)" font-size="9.6" fill="#1a1208" text-anchor="middle" font-weight="bold">A</text>
<polygon points="622,445.5 628.8,445.5 622,482.5" fill="#9c9c9c" opacity="1"/>
<line x1="622" y1="436.7" x2="622" y2="488.7" stroke="#101010" stroke-width="2" />
<line x1="615.5" y1="445.5" x2="628.5" y2="445.5" stroke="#101010" stroke-width="1" />
<line x1="615.5" y1="482.5" x2="628.5" y2="482.5" stroke="#101010" stroke-width="1" />
<rect x="616.8" y="474.8" width="12.4" height="17" rx="4" fill="#0c1230" opacity="0.32"/>
<rect x="615.9" y="473.7" width="12.2" height="16.6" fill="url(#hg)" rx="4" stroke="#18224e" stroke-width="1.15"/>
<rect x="618.1" y="476.1" width="7.8" height="11.8" fill="none" rx="2.6" stroke="#8797d8" stroke-width="0.9" opacity="0.7"/>
<line x1="617.6" y1="482" x2="626.4" y2="482" stroke="#3c4c92" stroke-width="1.1" />
<text transform="translate(622 503.8) scale(0.9 1)" font-size="9.6" fill="#1a1208" text-anchor="middle" font-weight="bold">H</text>
<polygon points="641,445.5 647.8,445.5 641,482.5" fill="#9c9c9c" opacity="1"/>
<line x1="641" y1="436.7" x2="641" y2="488.7" stroke="#101010" stroke-width="2" />
<line x1="634.5" y1="445.5" x2="647.5" y2="445.5" stroke="#101010" stroke-width="1" />
<line x1="634.5" y1="482.5" x2="647.5" y2="482.5" stroke="#101010" stroke-width="1" />
<rect x="635.8" y="451.3" width="12.4" height="17" rx="4" fill="#0c1230" opacity="0.32"/>
<rect x="634.9" y="450.2" width="12.2" height="16.6" fill="url(#hg)" rx="4" stroke="#18224e" stroke-width="1.15"/>
<rect x="637.1" y="452.6" width="7.8" height="11.8" fill="none" rx="2.6" stroke="#8797d8" stroke-width="0.9" opacity="0.7"/>
<line x1="636.6" y1="458.5" x2="645.4" y2="458.5" stroke="#3c4c92" stroke-width="1.1" />
<text transform="translate(640.9 503.8) scale(0.9 1)" font-size="9.6" fill="#1a1208" text-anchor="middle" font-weight="bold">D</text>
<polygon points="660,445.5 666.8,445.5 660,482.5" fill="#9c9c9c" opacity="1"/>
<line x1="660" y1="436.7" x2="660" y2="488.7" stroke="#101010" stroke-width="2" />
<line x1="653.5" y1="445.5" x2="666.5" y2="445.5" stroke="#101010" stroke-width="1" />
<line x1="653.5" y1="482.5" x2="666.5" y2="482.5" stroke="#101010" stroke-width="1" />
<rect x="654.8" y="438.5" width="12.4" height="17" rx="4" fill="#0c1230" opacity="0.32"/>
<rect x="653.9" y="437.4" width="12.2" height="16.6" fill="url(#hg)" rx="4" stroke="#18224e" stroke-width="1.15"/>
<rect x="656.1" y="439.8" width="7.8" height="11.8" fill="none" rx="2.6" stroke="#8797d8" stroke-width="0.9" opacity="0.7"/>
<line x1="655.6" y1="445.7" x2="664.4" y2="445.7" stroke="#3c4c92" stroke-width="1.1" />
<text transform="translate(659.6 503.8) scale(0.9 1)" font-size="9.6" fill="#1a1208" text-anchor="middle" font-weight="bold">S</text>
<polygon points="679,445.5 685.8,445.5 679,482.5" fill="#9c9c9c" opacity="1"/>
<line x1="679" y1="436.7" x2="679" y2="488.7" stroke="#101010" stroke-width="2" />
<line x1="672.5" y1="445.5" x2="685.5" y2="445.5" stroke="#101010" stroke-width="1" />
<line x1="672.5" y1="482.5" x2="685.5" y2="482.5" stroke="#101010" stroke-width="1" />
<rect x="673.8" y="438.5" width="12.4" height="17" rx="4" fill="#0c1230" opacity="0.32"/>
<rect x="672.9" y="437.4" width="12.2" height="16.6" fill="url(#hg)" rx="4" stroke="#18224e" stroke-width="1.15"/>
<rect x="675.1" y="439.8" width="7.8" height="11.8" fill="none" rx="2.6" stroke="#8797d8" stroke-width="0.9" opacity="0.7"/>
<line x1="674.6" y1="445.7" x2="683.4" y2="445.7" stroke="#3c4c92" stroke-width="1.1" />
<text transform="translate(678.5 503.8) scale(0.9 1)" font-size="9.6" fill="#1a1208" text-anchor="middle" font-weight="bold">R</text>
<line x1="702.8" y1="62" x2="702.8" y2="508" stroke="#0b0b0e" stroke-width="1.6" />
<rect x="703.5" y="372.5" width="6.3" height="48.3" fill="#2f83f0"/>
<rect x="703.5" y="420.8" width="6.3" height="87.2" fill="#ff920a"/>
<text x="0" y="0" font-size="5.6" fill="#000" font-weight="bold" class="px" transform="translate(704.3 348.3) rotate(90)" textLength="21.5" lengthAdjust="spacingAndGlyphs">SCENE</text>
<text x="0" y="0" font-size="5.6" fill="#000" font-weight="bold" class="px" transform="translate(704.3 377) rotate(90)" textLength="23.6" lengthAdjust="spacingAndGlyphs">ROUTE</text>
<text x="0" y="0" font-size="5.6" fill="#000" font-weight="bold" class="px" transform="translate(704.3 433.7) rotate(90)" textLength="52" lengthAdjust="spacingAndGlyphs">MODULATION</text>
<line x1="712" y1="61" x2="837" y2="61" stroke="#a9acc6" stroke-width="1.6" />
<line x1="712" y1="165" x2="837" y2="165" stroke="#a9acc6" stroke-width="1.6" />
<rect x="719" y="67" width="8.6" height="9" fill="#7b7c82" stroke="#1c1c20" stroke-width="1.1"/>
<text x="723.4" y="73.6" font-size="5.6" fill="#f4f4f6" text-anchor="middle" font-weight="bold" class="px">A</text>
<line x1="728" y1="71.5" x2="732.5" y2="71.5" stroke="#141418" stroke-width="1.1" />
<polygon points="730.9,69.4 734.5,71.5 730.9,73.6" fill="#141418" />
<rect x="734.7" y="67" width="17" height="9" fill="#fdfdfd" stroke="#1c1c20" stroke-width="1.1"/>
<text x="743.3" y="73.6" font-size="5.6" fill="#111" text-anchor="middle" font-weight="bold" class="px">EQ</text>
<line x1="752.3" y1="71.5" x2="756.7" y2="71.5" stroke="#141418" stroke-width="1.1" />
<polygon points="755.1,69.4 758.7,71.5 755.1,73.6" fill="#141418" />
<rect x="758.9" y="67" width="17.8" height="9" fill="#7b7c82" stroke="#1c1c20" stroke-width="1.1"/>
<rect x="764.5" y="70.8" width="6.6" height="1.4" fill="#e8e8ec"/>
<rect x="734.7" y="85.5" width="17" height="9" fill="#7b7c82" stroke="#1c1c20" stroke-width="1.1"/>
<text x="743.3" y="92.1" font-size="5.6" fill="#f4f4f6" text-anchor="middle" font-weight="bold" class="px">DLY</text>
<line x1="752.3" y1="90.2" x2="758.9" y2="90.2" stroke="#141418" stroke-width="1.1" />
<rect x="758.9" y="85.5" width="17.8" height="9" fill="#7b7c82" stroke="#1c1c20" stroke-width="1.1"/>
<rect x="764.5" y="89.3" width="6.6" height="1.4" fill="#e8e8ec"/>
<rect x="719" y="104.6" width="8.6" height="9" fill="#7b7c82" stroke="#1c1c20" stroke-width="1.1"/>
<text x="723.4" y="111.2" font-size="5.6" fill="#f4f4f6" text-anchor="middle" font-weight="bold" class="px">B</text>
<line x1="728" y1="109.1" x2="732.5" y2="109.1" stroke="#141418" stroke-width="1.1" />
<polygon points="730.9,107 734.5,109.1 730.9,111.2" fill="#141418" />
<rect x="734.7" y="104.6" width="17" height="9" fill="#7b7c82" stroke="#1c1c20" stroke-width="1.1"/>
<rect x="739.9" y="108.4" width="6.6" height="1.4" fill="#e8e8ec"/>
<line x1="752.3" y1="109.1" x2="756.7" y2="109.1" stroke="#141418" stroke-width="1.1" />
<polygon points="755.1,107 758.7,109.1 755.1,111.2" fill="#141418" />
<rect x="758.9" y="104.6" width="17.8" height="9" fill="#7b7c82" stroke="#1c1c20" stroke-width="1.1"/>
<rect x="764.5" y="108.4" width="6.6" height="1.4" fill="#e8e8ec"/>
<path d="M777 70.3 H782.3 V89 H785.5" fill="none" stroke="#141418" stroke-width="1.1"/>
<path d="M777 74 H779.6 V78.6 H736.8 V82" fill="none" stroke="#141418" stroke-width="1.1"/>
<path d="M761.3 78.6 V82" fill="none" stroke="#141418" stroke-width="1.1"/>
<path d="M777 111 H782.3 V91.4 H785.5" fill="none" stroke="#141418" stroke-width="1.1"/>
<path d="M777 107.3 H779.6 V101 H736.8 V98.5" fill="none" stroke="#141418" stroke-width="1.1"/>
<path d="M761.3 101 V98.5" fill="none" stroke="#141418" stroke-width="1.1"/>
<polygon points="734.6,82 739,82 736.8,85" fill="#141418" />
<polygon points="759.1,82 763.5,82 761.3,85" fill="#141418" />
<polygon points="734.6,99 739,99 736.8,96" fill="#141418" />
<polygon points="759.1,99 763.5,99 761.3,96" fill="#141418" />
<line x1="777" y1="89" x2="785.5" y2="89" stroke="#141418" stroke-width="1.1" />
<line x1="777" y1="91.4" x2="785.5" y2="91.4" stroke="#141418" stroke-width="1.1" />
<circle cx="789.2" cy="90.2" r="3.8" fill="#6f7076" stroke="#141418" stroke-width="1.1"/>
<line x1="787.2" y1="90.2" x2="791.2" y2="90.2" stroke="#f4f4f6" stroke-width="1.2" />
<line x1="789.2" y1="88.2" x2="789.2" y2="92.2" stroke="#f4f4f6" stroke-width="1.2" />
<path d="M793 90.2 H795.7 V80.9 H801.5" fill="none" stroke="#141418" stroke-width="1.1"/>
<rect x="801.5" y="76.3" width="17.3" height="9.2" fill="#7b7c82" stroke="#1c1c20" stroke-width="1.1"/>
<rect x="806.85" y="80.2" width="6.6" height="1.4" fill="#e8e8ec"/>
<rect x="801.5" y="94.6" width="17.3" height="9.2" fill="#7b7c82" stroke="#1c1c20" stroke-width="1.1"/>
<rect x="806.85" y="98.5" width="6.6" height="1.4" fill="#e8e8ec"/>
<path d="M819 80.9 H821.7 V91.5 H798.7 V99.2 H801.5" fill="none" stroke="#141418" stroke-width="1.1"/>
<path d="M819 99.2 H824 V90.2 H827" fill="none" stroke="#141418" stroke-width="1.1"/>
<polygon points="826,87.9 829.8,90.2 826,92.5" fill="#141418" />
<polygon points="722.5,127 827.5,120.2 827.5,127" fill="#9a9ba3" opacity="0.9"/>
<line x1="717.7" y1="127" x2="832.7" y2="127" stroke="#101010" stroke-width="2" />
<line x1="722.5" y1="120.5" x2="722.5" y2="133.5" stroke="#101010" stroke-width="1" />
<line x1="827.5" y1="120.5" x2="827.5" y2="133.5" stroke="#101010" stroke-width="1" />
<text transform="translate(826 136.7) scale(0.92 1)" font-size="9.4" fill="#1a1a1a" text-anchor="end" stroke="#1a1a1a" stroke-width="0.22">FX1 Return</text>
<rect x="820.4" y="122.4" width="17" height="12.6" rx="4.2" fill="#0c1230" opacity="0.32"/>
<rect x="819.8" y="121.3" width="16.4" height="12.2" fill="url(#hg)" rx="4" stroke="#18224e" stroke-width="1.15"/>
<rect x="822.2" y="123.5" width="11.6" height="7.8" fill="none" rx="2.6" stroke="#8797d8" stroke-width="0.9" opacity="0.7"/>
<line x1="828" y1="123" x2="828" y2="131.8" stroke="#3c4c92" stroke-width="1.1" />
<polygon points="722.5,147 827.5,140.2 827.5,147" fill="#9a9ba3" opacity="0.9"/>
<line x1="717.7" y1="147" x2="832.7" y2="147" stroke="#101010" stroke-width="2" />
<line x1="722.5" y1="140.5" x2="722.5" y2="153.5" stroke="#101010" stroke-width="1" />
<line x1="827.5" y1="140.5" x2="827.5" y2="153.5" stroke="#101010" stroke-width="1" />
<text transform="translate(826 156.7) scale(0.92 1)" font-size="9.4" fill="#1a1a1a" text-anchor="end" stroke="#1a1a1a" stroke-width="0.22">FX2 Return</text>
<rect x="820.4" y="142.4" width="17" height="12.6" rx="4.2" fill="#0c1230" opacity="0.32"/>
<rect x="819.8" y="141.3" width="16.4" height="12.2" fill="url(#hg)" rx="4" stroke="#18224e" stroke-width="1.15"/>
<rect x="822.2" y="143.5" width="11.6" height="7.8" fill="none" rx="2.6" stroke="#8797d8" stroke-width="0.9" opacity="0.7"/>
<line x1="828" y1="143" x2="828" y2="151.8" stroke="#3c4c92" stroke-width="1.1" />
<rect x="719.3" y="173" width="112.5" height="9.8" fill="#f4f4f6" rx="4.9" stroke="#9fa1b2" stroke-width="1"/>
<text x="723.5" y="181" font-size="8.9" fill="#111">A Insert 1</text>
<text x="822.5" y="181" font-size="8.9" fill="#111" text-anchor="end">EQ</text>
<polygon points="824,176.8 827.4,176.8 825.7,179" fill="#111" />
<text transform="translate(716.3 200.2) scale(0.89 1)" font-size="9.3" fill="#9c9eac">Band 1</text>
<line x1="716" y1="202.2" x2="830" y2="202.2" stroke="#a7a9b8" stroke-width="1.2" />
<polygon points="722.5,212 722.5,218.8 775,212" fill="#9a9ba3" opacity="0.9"/>
<polygon points="775,212 827.5,205.2 827.5,212" fill="#9a9ba3" opacity="0.9"/>
<line x1="717.7" y1="212" x2="832.7" y2="212" stroke="#101010" stroke-width="2" />
<line x1="722.5" y1="205.5" x2="722.5" y2="218.5" stroke="#101010" stroke-width="1" />
<line x1="827.5" y1="205.5" x2="827.5" y2="218.5" stroke="#101010" stroke-width="1" />
<text transform="translate(825.5 221.7) scale(0.92 1)" font-size="9.4" fill="#1a1a1a" text-anchor="end" stroke="#1a1a1a" stroke-width="0.22">L Gain</text>
<rect x="767.4" y="207.4" width="17" height="12.6" rx="4.2" fill="#0c1230" opacity="0.32"/>
<rect x="766.8" y="206.3" width="16.4" height="12.2" fill="url(#hg)" rx="4" stroke="#18224e" stroke-width="1.15"/>
<rect x="769.2" y="208.5" width="11.6" height="7.8" fill="none" rx="2.6" stroke="#8797d8" stroke-width="0.9" opacity="0.7"/>
<line x1="775" y1="208" x2="775" y2="216.8" stroke="#3c4c92" stroke-width="1.1" />
<polygon points="722.5,231 827.5,224.2 827.5,231" fill="#9a9ba3" opacity="0.9"/>
<line x1="717.7" y1="231" x2="832.7" y2="231" stroke="#101010" stroke-width="2" />
<line x1="722.5" y1="224.5" x2="722.5" y2="237.5" stroke="#101010" stroke-width="1" />
<line x1="827.5" y1="224.5" x2="827.5" y2="237.5" stroke="#101010" stroke-width="1" />
<text transform="translate(825.5 240.7) scale(0.92 1)" font-size="9.4" fill="#1a1a1a" text-anchor="end" stroke="#1a1a1a" stroke-width="0.22">L Freq</text>
<rect x="741.4" y="226.4" width="17" height="12.6" rx="4.2" fill="#0c1230" opacity="0.32"/>
<rect x="740.8" y="225.3" width="16.4" height="12.2" fill="url(#hg)" rx="4" stroke="#18224e" stroke-width="1.15"/>
<rect x="743.2" y="227.5" width="11.6" height="7.8" fill="none" rx="2.6" stroke="#8797d8" stroke-width="0.9" opacity="0.7"/>
<line x1="749" y1="227" x2="749" y2="235.8" stroke="#3c4c92" stroke-width="1.1" />
<polygon points="722.5,250 827.5,243.2 827.5,250" fill="#9a9ba3" opacity="0.9"/>
<line x1="717.7" y1="250" x2="832.7" y2="250" stroke="#101010" stroke-width="2" />
<line x1="722.5" y1="243.5" x2="722.5" y2="256.5" stroke="#101010" stroke-width="1" />
<line x1="827.5" y1="243.5" x2="827.5" y2="256.5" stroke="#101010" stroke-width="1" />
<text transform="translate(825.5 259.7) scale(0.92 1)" font-size="9.4" fill="#1a1a1a" text-anchor="end" stroke="#1a1a1a" stroke-width="0.22">L BW</text>
<rect x="756.4" y="245.4" width="17" height="12.6" rx="4.2" fill="#0c1230" opacity="0.32"/>
<rect x="755.8" y="244.3" width="16.4" height="12.2" fill="url(#hg)" rx="4" stroke="#18224e" stroke-width="1.15"/>
<rect x="758.2" y="246.5" width="11.6" height="7.8" fill="none" rx="2.6" stroke="#8797d8" stroke-width="0.9" opacity="0.7"/>
<line x1="764" y1="246" x2="764" y2="254.8" stroke="#3c4c92" stroke-width="1.1" />
<text transform="translate(716.3 275.1) scale(0.89 1)" font-size="9.3" fill="#9c9eac">Band 2</text>
<line x1="716" y1="277.1" x2="830" y2="277.1" stroke="#a7a9b8" stroke-width="1.2" />
<polygon points="722.5,287 722.5,293.8 775,287" fill="#9a9ba3" opacity="0.9"/>
<polygon points="775,287 827.5,280.2 827.5,287" fill="#9a9ba3" opacity="0.9"/>
<line x1="717.7" y1="287" x2="832.7" y2="287" stroke="#101010" stroke-width="2" />
<line x1="722.5" y1="280.5" x2="722.5" y2="293.5" stroke="#101010" stroke-width="1" />
<line x1="827.5" y1="280.5" x2="827.5" y2="293.5" stroke="#101010" stroke-width="1" />
<text transform="translate(825.5 296.7) scale(0.92 1)" font-size="9.4" fill="#1a1a1a" text-anchor="end" stroke="#1a1a1a" stroke-width="0.22">M Gain</text>
<rect x="758.4" y="282.4" width="17" height="12.6" rx="4.2" fill="#0c1230" opacity="0.32"/>
<rect x="757.8" y="281.3" width="16.4" height="12.2" fill="url(#hg)" rx="4" stroke="#18224e" stroke-width="1.15"/>
<rect x="760.2" y="283.5" width="11.6" height="7.8" fill="none" rx="2.6" stroke="#8797d8" stroke-width="0.9" opacity="0.7"/>
<line x1="766" y1="283" x2="766" y2="291.8" stroke="#3c4c92" stroke-width="1.1" />
<polygon points="722.5,305 827.5,298.2 827.5,305" fill="#9a9ba3" opacity="0.9"/>
<line x1="717.7" y1="305" x2="832.7" y2="305" stroke="#101010" stroke-width="2" />
<line x1="722.5" y1="298.5" x2="722.5" y2="311.5" stroke="#101010" stroke-width="1" />
<line x1="827.5" y1="298.5" x2="827.5" y2="311.5" stroke="#101010" stroke-width="1" />
<text transform="translate(825.5 314.7) scale(0.92 1)" font-size="9.4" fill="#1a1a1a" text-anchor="end" stroke="#1a1a1a" stroke-width="0.22">M Freq</text>
<rect x="752.4" y="300.4" width="17" height="12.6" rx="4.2" fill="#0c1230" opacity="0.32"/>
<rect x="751.8" y="299.3" width="16.4" height="12.2" fill="url(#hg)" rx="4" stroke="#18224e" stroke-width="1.15"/>
<rect x="754.2" y="301.5" width="11.6" height="7.8" fill="none" rx="2.6" stroke="#8797d8" stroke-width="0.9" opacity="0.7"/>
<line x1="760" y1="301" x2="760" y2="309.8" stroke="#3c4c92" stroke-width="1.1" />
<polygon points="722.5,324 827.5,317.2 827.5,324" fill="#9a9ba3" opacity="0.9"/>
<line x1="717.7" y1="324" x2="832.7" y2="324" stroke="#101010" stroke-width="2" />
<line x1="722.5" y1="317.5" x2="722.5" y2="330.5" stroke="#101010" stroke-width="1" />
<line x1="827.5" y1="317.5" x2="827.5" y2="330.5" stroke="#101010" stroke-width="1" />
<text transform="translate(825.5 333.7) scale(0.92 1)" font-size="9.4" fill="#1a1a1a" text-anchor="end" stroke="#1a1a1a" stroke-width="0.22">M BW</text>
<rect x="756.4" y="319.4" width="17" height="12.6" rx="4.2" fill="#0c1230" opacity="0.32"/>
<rect x="755.8" y="318.3" width="16.4" height="12.2" fill="url(#hg)" rx="4" stroke="#18224e" stroke-width="1.15"/>
<rect x="758.2" y="320.5" width="11.6" height="7.8" fill="none" rx="2.6" stroke="#8797d8" stroke-width="0.9" opacity="0.7"/>
<line x1="764" y1="320" x2="764" y2="328.8" stroke="#3c4c92" stroke-width="1.1" />
<text transform="translate(716.3 350.1) scale(0.89 1)" font-size="9.3" fill="#9c9eac">Band 3</text>
<line x1="716" y1="352.1" x2="830" y2="352.1" stroke="#a7a9b8" stroke-width="1.2" />
<polygon points="722.5,362 722.5,368.8 775,362" fill="#6f88dc" opacity="0.9"/>
<polygon points="775,362 827.5,355.2 827.5,362" fill="#6f88dc" opacity="0.9"/>
<line x1="717.7" y1="362" x2="832.7" y2="362" stroke="#3450b8" stroke-width="2" />
<line x1="722.5" y1="355.5" x2="722.5" y2="368.5" stroke="#3450b8" stroke-width="1" />
<line x1="827.5" y1="355.5" x2="827.5" y2="368.5" stroke="#3450b8" stroke-width="1" />
<line x1="775" y1="359" x2="775" y2="365" stroke="#3450b8" stroke-width="1" />
<text transform="translate(825.5 371.7) scale(0.92 1)" font-size="9.4" fill="#1a1a1a" text-anchor="end" stroke="#1a1a1a" stroke-width="0.22">H Gain</text>
<rect x="792.3" y="356.3" width="16.4" height="12.2" fill="#b9bac2" rx="4" stroke="#7d7f8c" stroke-width="1" opacity="0.75"/>
<line x1="800.5" y1="358.2" x2="800.5" y2="366.6" stroke="#777" stroke-width="1" opacity="0.7"/>
<rect x="781.9" y="357.4" width="17" height="12.6" rx="4.2" fill="#0c1230" opacity="0.32"/>
<rect x="781.3" y="356.3" width="16.4" height="12.2" fill="url(#hg)" rx="4" stroke="#18224e" stroke-width="1.15"/>
<rect x="783.7" y="358.5" width="11.6" height="7.8" fill="none" rx="2.6" stroke="#8797d8" stroke-width="0.9" opacity="0.7"/>
<line x1="789.5" y1="358" x2="789.5" y2="366.8" stroke="#3c4c92" stroke-width="1.1" />
<polygon points="722.5,380 827.5,373.2 827.5,380" fill="#9a9ba3" opacity="0.9"/>
<line x1="717.7" y1="380" x2="832.7" y2="380" stroke="#101010" stroke-width="2" />
<line x1="722.5" y1="373.5" x2="722.5" y2="386.5" stroke="#101010" stroke-width="1" />
<line x1="827.5" y1="373.5" x2="827.5" y2="386.5" stroke="#101010" stroke-width="1" />
<text transform="translate(825.5 389.7) scale(0.92 1)" font-size="9.4" fill="#1a1a1a" text-anchor="end" stroke="#1a1a1a" stroke-width="0.22">H Freq</text>
<rect x="816.4" y="375.4" width="17" height="12.6" rx="4.2" fill="#0c1230" opacity="0.32"/>
<rect x="815.8" y="374.3" width="16.4" height="12.2" fill="url(#hg)" rx="4" stroke="#18224e" stroke-width="1.15"/>
<rect x="818.2" y="376.5" width="11.6" height="7.8" fill="none" rx="2.6" stroke="#8797d8" stroke-width="0.9" opacity="0.7"/>
<line x1="824" y1="376" x2="824" y2="384.8" stroke="#3c4c92" stroke-width="1.1" />
<polygon points="722.5,400 827.5,393.2 827.5,400" fill="#9a9ba3" opacity="0.9"/>
<line x1="717.7" y1="400" x2="832.7" y2="400" stroke="#101010" stroke-width="2" />
<line x1="722.5" y1="393.5" x2="722.5" y2="406.5" stroke="#101010" stroke-width="1" />
<line x1="827.5" y1="393.5" x2="827.5" y2="406.5" stroke="#101010" stroke-width="1" />
<text transform="translate(825.5 409.7) scale(0.92 1)" font-size="9.4" fill="#1a1a1a" text-anchor="end" stroke="#1a1a1a" stroke-width="0.22">H BW</text>
<rect x="755.4" y="395.4" width="17" height="12.6" rx="4.2" fill="#0c1230" opacity="0.32"/>
<rect x="754.8" y="394.3" width="16.4" height="12.2" fill="url(#hg)" rx="4" stroke="#18224e" stroke-width="1.15"/>
<rect x="757.2" y="396.5" width="11.6" height="7.8" fill="none" rx="2.6" stroke="#8797d8" stroke-width="0.9" opacity="0.7"/>
<line x1="763" y1="396" x2="763" y2="404.8" stroke="#3c4c92" stroke-width="1.1" />
<text transform="translate(716.3 425.2) scale(0.89 1)" font-size="9.3" fill="#9c9eac">Output</text>
<line x1="716" y1="427.2" x2="830" y2="427.2" stroke="#a7a9b8" stroke-width="1.2" />
<polygon points="722.5,437 722.5,443.8 775,437" fill="#9a9ba3" opacity="0.9"/>
<polygon points="775,437 827.5,430.2 827.5,437" fill="#9a9ba3" opacity="0.9"/>
<line x1="717.7" y1="437" x2="832.7" y2="437" stroke="#101010" stroke-width="2" />
<line x1="722.5" y1="430.5" x2="722.5" y2="443.5" stroke="#101010" stroke-width="1" />
<line x1="827.5" y1="430.5" x2="827.5" y2="443.5" stroke="#101010" stroke-width="1" />
<text transform="translate(825.5 446.7) scale(0.92 1)" font-size="9.4" fill="#1a1a1a" text-anchor="end" stroke="#1a1a1a" stroke-width="0.22">Gain</text>
<rect x="767.7" y="432.4" width="17" height="12.6" rx="4.2" fill="#0c1230" opacity="0.32"/>
<rect x="767.1" y="431.3" width="16.4" height="12.2" fill="url(#hg)" rx="4" stroke="#18224e" stroke-width="1.15"/>
<rect x="769.5" y="433.5" width="11.6" height="7.8" fill="none" rx="2.6" stroke="#8797d8" stroke-width="0.9" opacity="0.7"/>
<line x1="775.3" y1="433" x2="775.3" y2="441.8" stroke="#3c4c92" stroke-width="1.1" />
<rect x="801" y="493.7" width="34.5" height="10" fill="url(#btn)" rx="5" stroke="#9fa1b2" stroke-width="1"/>
<text transform="translate(818.3 501.8) scale(0.9 1)" font-size="9" fill="#111" text-anchor="middle" font-weight="bold">About</text>
</svg>
</body></html>
